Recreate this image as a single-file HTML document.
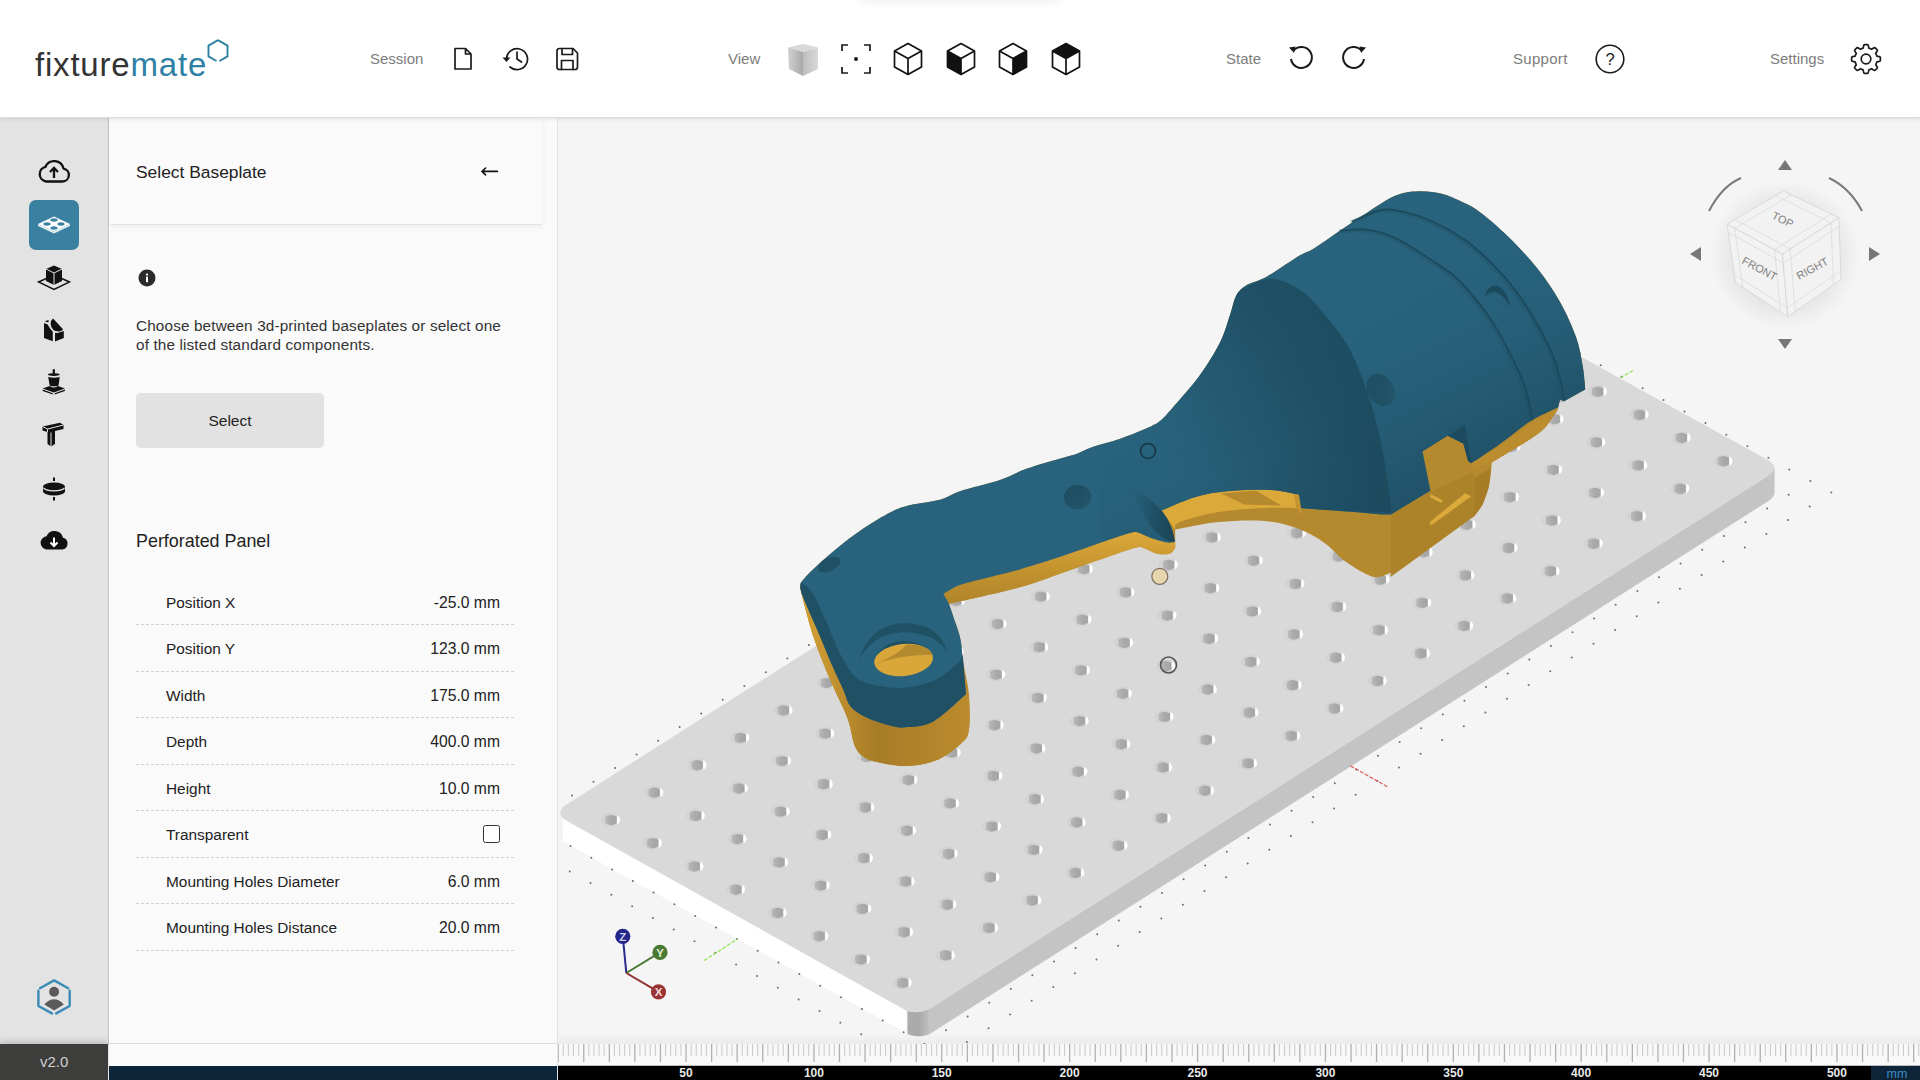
<!DOCTYPE html>
<html><head><meta charset="utf-8"><style>
*{box-sizing:border-box;margin:0;padding:0}
html,body{width:1920px;height:1080px;overflow:hidden;background:#f4f4f4;font-family:"Liberation Sans",sans-serif}
.abs{position:absolute}
#header{position:absolute;left:0;top:0;width:1920px;height:118px;background:#fff;border-bottom:1px solid #dcdcdc;box-shadow:0 1px 4px rgba(0,0,0,0.10);z-index:3}
.hl{position:absolute;font-size:15px;color:#7c7c7c;line-height:18px;top:50px;white-space:nowrap}
#sidebar{position:absolute;left:0;top:118px;width:109px;height:926px;background:#e3e3e3;border-right:1px solid #c4c4c4}
#panel{position:absolute;left:109px;top:118px;width:449px;height:926px;background:#fafafa;border-right:1px solid #e3e3e3;box-shadow:inset 1px 0 0 #fff}
#pcard{position:absolute;left:1px;top:0;width:432px;height:107px;background:#fafafa;border-bottom:1px solid #e2e2e2;box-shadow:0 2px 7px rgba(0,0,0,0.06)}
.t{position:absolute;white-space:nowrap;color:#222}
.row{position:absolute;left:27px;width:378px;height:46.5px;border-bottom:1px dashed #d0d0d0}
.row .l{position:absolute;left:30px;top:15px;font-size:15.4px;color:#222;line-height:18px;white-space:nowrap}
.row .v{position:absolute;right:14px;top:15px;font-size:15.7px;color:#222;line-height:18px;white-space:nowrap}
.sb{position:absolute;left:29px;width:50px;height:50px}
</style></head><body>
<svg id="scene" width="1920" height="1080" viewBox="0 0 1920 1080" style="position:absolute;left:0;top:0">
<defs>
<g id="hl"><ellipse rx="9.6" ry="6.8" fill="#d3d3d3"/><path d="M6.6,-4.9 A9.6,6.8 0 0 1 6.6,4.9 Q5.4,0 6.6,-4.9Z" fill="#fff"/><path d="M-5.4,-3.2 Q0.25,-6.6 5.9,-3.2 V3.3 Q0.25,7.6 -5.4,3.3 Z" fill="url(#hole)"/></g>
<linearGradient id="hole" x1="0" x2="1" y1="0" y2="0">
<stop offset="0" stop-color="#b8b8b8"/><stop offset="0.5" stop-color="#aaaaaa"/><stop offset="1" stop-color="#a4a4a4"/></linearGradient>

<linearGradient id="drumg" gradientUnits="userSpaceOnUse" x1="1430" y1="270" x2="1520" y2="445"><stop offset="0" stop-color="#163d4e" stop-opacity="0"/><stop offset="0.45" stop-color="#163d4e" stop-opacity="0.08"/><stop offset="1" stop-color="#163d4e" stop-opacity="0.38"/></linearGradient>
<linearGradient id="toothg" x1="0" y1="0" x2="1" y2="0"><stop offset="0" stop-color="#27617b" stop-opacity="0.2"/><stop offset="0.55" stop-color="#1f5165"/><stop offset="1" stop-color="#1b475a"/></linearGradient>
<linearGradient id="holebg" x1="0" y1="0" x2="1" y2="1"><stop offset="0" stop-color="#1e4e62"/><stop offset="0.55" stop-color="#1f5064"/><stop offset="1" stop-color="#25596f"/></linearGradient>
<linearGradient id="blueg" x1="0" y1="0" x2="1" y2="1"><stop offset="0" stop-color="#29637d"/><stop offset="0.6" stop-color="#28627c"/><stop offset="1" stop-color="#245a72"/></linearGradient>
<linearGradient id="shg" x1="0.95" y1="0.25" x2="0.05" y2="0.85"><stop offset="0" stop-color="#1d4c60"/><stop offset="0.3" stop-color="#1f5065"/><stop offset="0.62" stop-color="#23586e" stop-opacity="0.8"/><stop offset="0.95" stop-color="#27617b" stop-opacity="0"/></linearGradient>
<linearGradient id="ybandg" x1="0" y1="0" x2="0" y2="1"><stop offset="0" stop-color="#dca83b"/><stop offset="0.5" stop-color="#c4942f"/><stop offset="1" stop-color="#b0842a"/></linearGradient>
<linearGradient id="hookyg" x1="0" y1="0" x2="1" y2="0"><stop offset="0" stop-color="#d6a236"/><stop offset="0.45" stop-color="#a87c27"/><stop offset="1" stop-color="#bb8b2d"/></linearGradient>
</defs>
<clipPath id="vclip"><rect x="558" y="119" width="1362" height="925"/></clipPath>
<g clip-path="url(#vclip)">
<rect x="558" y="119" width="1362" height="925" fill="#f5f5f5"/>
<g fill="#4d4d4d" opacity="0.8"><circle cx="572" cy="795.5" r="1"/><circle cx="593.5" cy="781.8" r="1"/><circle cx="615.1" cy="768.1" r="1"/><circle cx="636.6" cy="754.4" r="1"/><circle cx="658.1" cy="740.8" r="1"/><circle cx="679.7" cy="727.1" r="1"/><circle cx="701.2" cy="713.4" r="1"/><circle cx="722.7" cy="699.7" r="1"/><circle cx="744.3" cy="686" r="1"/><circle cx="765.8" cy="672.3" r="1"/><circle cx="787.4" cy="658.6" r="1"/><circle cx="808.9" cy="644.9" r="1"/><circle cx="830.4" cy="631.2" r="1"/><circle cx="852" cy="617.5" r="1"/><circle cx="873.5" cy="603.8" r="1"/><circle cx="895.1" cy="590.1" r="1"/><circle cx="916.6" cy="576.4" r="1"/><circle cx="938.2" cy="562.7" r="1"/><circle cx="959.7" cy="549" r="1"/><circle cx="981.3" cy="535.3" r="1"/><circle cx="1002.8" cy="521.6" r="1"/><circle cx="1024.4" cy="507.9" r="1"/><circle cx="1045.9" cy="494.2" r="1"/><circle cx="1067.5" cy="480.5" r="1"/><circle cx="1089" cy="466.7" r="1"/><circle cx="1110.6" cy="453" r="1"/><circle cx="1132.1" cy="439.3" r="1"/><circle cx="1153.7" cy="425.6" r="1"/><circle cx="1175.3" cy="411.9" r="1"/><circle cx="1196.8" cy="398.2" r="1"/><circle cx="1218.4" cy="384.5" r="1"/><circle cx="1239.9" cy="370.8" r="1"/><circle cx="1261.5" cy="357.1" r="1"/><circle cx="1283.1" cy="343.4" r="1"/><circle cx="1304.6" cy="329.7" r="1"/><circle cx="1326.2" cy="315.9" r="1"/><circle cx="1347.8" cy="302.2" r="1"/><circle cx="1369.3" cy="288.5" r="1"/><circle cx="1390.9" cy="274.8" r="1"/><circle cx="1412.5" cy="261.1" r="1"/><circle cx="571.2" cy="820.8" r="1"/><circle cx="592.8" cy="807.1" r="1"/><circle cx="614.3" cy="793.4" r="1"/><circle cx="635.8" cy="779.7" r="1"/><circle cx="657.4" cy="766" r="1"/><circle cx="678.9" cy="752.4" r="1"/><circle cx="700.5" cy="738.7" r="1"/><circle cx="722" cy="725" r="1"/><circle cx="743.5" cy="711.3" r="1"/><circle cx="765.1" cy="697.6" r="1"/><circle cx="786.6" cy="683.9" r="1"/><circle cx="808.2" cy="670.2" r="1"/><circle cx="829.7" cy="656.5" r="1"/><circle cx="851.3" cy="642.8" r="1"/><circle cx="872.8" cy="629.1" r="1"/><circle cx="894.4" cy="615.4" r="1"/><circle cx="915.9" cy="601.7" r="1"/><circle cx="937.4" cy="588" r="1"/><circle cx="959" cy="574.3" r="1"/><circle cx="980.6" cy="560.6" r="1"/><circle cx="1002.1" cy="546.9" r="1"/><circle cx="1023.7" cy="533.1" r="1"/><circle cx="1045.2" cy="519.4" r="1"/><circle cx="1066.8" cy="505.7" r="1"/><circle cx="1088.3" cy="492" r="1"/><circle cx="1109.9" cy="478.3" r="1"/><circle cx="1131.4" cy="464.6" r="1"/><circle cx="1153" cy="450.9" r="1"/><circle cx="1174.6" cy="437.2" r="1"/><circle cx="1196.1" cy="423.5" r="1"/><circle cx="1217.7" cy="409.8" r="1"/><circle cx="1239.2" cy="396.1" r="1"/><circle cx="1260.8" cy="382.4" r="1"/><circle cx="1282.4" cy="368.6" r="1"/><circle cx="1303.9" cy="354.9" r="1"/><circle cx="1325.5" cy="341.2" r="1"/><circle cx="1347.1" cy="327.5" r="1"/><circle cx="1368.6" cy="313.8" r="1"/><circle cx="1390.2" cy="300.1" r="1"/><circle cx="1411.8" cy="286.4" r="1"/><circle cx="1433.4" cy="272.6" r="1"/><circle cx="592" cy="832.4" r="1"/><circle cx="613.6" cy="818.7" r="1"/><circle cx="635.1" cy="805" r="1"/><circle cx="656.6" cy="791.3" r="1"/><circle cx="678.2" cy="777.7" r="1"/><circle cx="699.7" cy="764" r="1"/><circle cx="721.3" cy="750.3" r="1"/><circle cx="742.8" cy="736.6" r="1"/><circle cx="764.3" cy="722.9" r="1"/><circle cx="785.9" cy="709.2" r="1"/><circle cx="807.4" cy="695.5" r="1"/><circle cx="829" cy="681.8" r="1"/><circle cx="850.5" cy="668.1" r="1"/><circle cx="872.1" cy="654.4" r="1"/><circle cx="893.6" cy="640.7" r="1"/><circle cx="915.2" cy="627" r="1"/><circle cx="936.7" cy="613.3" r="1"/><circle cx="958.3" cy="599.6" r="1"/><circle cx="979.8" cy="585.8" r="1"/><circle cx="1001.4" cy="572.1" r="1"/><circle cx="1022.9" cy="558.4" r="1"/><circle cx="1044.5" cy="544.7" r="1"/><circle cx="1066.1" cy="531" r="1"/><circle cx="1087.6" cy="517.3" r="1"/><circle cx="1109.2" cy="503.6" r="1"/><circle cx="1130.7" cy="489.9" r="1"/><circle cx="1152.3" cy="476.2" r="1"/><circle cx="1173.9" cy="462.5" r="1"/><circle cx="1195.4" cy="448.8" r="1"/><circle cx="1217" cy="435.1" r="1"/><circle cx="1238.6" cy="421.3" r="1"/><circle cx="1260.1" cy="407.6" r="1"/><circle cx="1281.7" cy="393.9" r="1"/><circle cx="1303.3" cy="380.2" r="1"/><circle cx="1324.8" cy="366.5" r="1"/><circle cx="1346.4" cy="352.8" r="1"/><circle cx="1368" cy="339.1" r="1"/><circle cx="1389.5" cy="325.3" r="1"/><circle cx="1411.1" cy="311.6" r="1"/><circle cx="1432.7" cy="297.9" r="1"/><circle cx="1454.3" cy="284.2" r="1"/><circle cx="569.7" cy="871.4" r="1"/><circle cx="612.8" cy="844" r="1"/><circle cx="634.3" cy="830.4" r="1"/><circle cx="655.9" cy="816.7" r="1"/><circle cx="677.4" cy="803" r="1"/><circle cx="699" cy="789.3" r="1"/><circle cx="720.5" cy="775.6" r="1"/><circle cx="742.1" cy="761.9" r="1"/><circle cx="763.6" cy="748.2" r="1"/><circle cx="785.2" cy="734.5" r="1"/><circle cx="806.7" cy="720.8" r="1"/><circle cx="828.2" cy="707.1" r="1"/><circle cx="849.8" cy="693.4" r="1"/><circle cx="871.3" cy="679.7" r="1"/><circle cx="892.9" cy="666" r="1"/><circle cx="914.5" cy="652.3" r="1"/><circle cx="936" cy="638.5" r="1"/><circle cx="957.6" cy="624.8" r="1"/><circle cx="979.1" cy="611.1" r="1"/><circle cx="1000.7" cy="597.4" r="1"/><circle cx="1022.2" cy="583.7" r="1"/><circle cx="1043.8" cy="570" r="1"/><circle cx="1065.4" cy="556.3" r="1"/><circle cx="1086.9" cy="542.6" r="1"/><circle cx="1108.5" cy="528.9" r="1"/><circle cx="1130" cy="515.2" r="1"/><circle cx="1151.6" cy="501.5" r="1"/><circle cx="1173.2" cy="487.8" r="1"/><circle cx="1194.7" cy="474.1" r="1"/><circle cx="1216.3" cy="460.3" r="1"/><circle cx="1237.9" cy="446.6" r="1"/><circle cx="1259.4" cy="432.9" r="1"/><circle cx="1281" cy="419.2" r="1"/><circle cx="1302.6" cy="405.5" r="1"/><circle cx="1324.1" cy="391.8" r="1"/><circle cx="1345.7" cy="378.1" r="1"/><circle cx="1367.3" cy="364.3" r="1"/><circle cx="1388.9" cy="350.6" r="1"/><circle cx="1410.4" cy="336.9" r="1"/><circle cx="1432" cy="323.2" r="1"/><circle cx="1453.6" cy="309.5" r="1"/><circle cx="1475.2" cy="295.8" r="1"/><circle cx="590.5" cy="883.1" r="1"/><circle cx="633.6" cy="855.7" r="1"/><circle cx="655.1" cy="842" r="1"/><circle cx="676.7" cy="828.3" r="1"/><circle cx="698.2" cy="814.6" r="1"/><circle cx="719.8" cy="800.9" r="1"/><circle cx="741.3" cy="787.2" r="1"/><circle cx="762.9" cy="773.5" r="1"/><circle cx="784.4" cy="759.8" r="1"/><circle cx="806" cy="746.1" r="1"/><circle cx="827.5" cy="732.4" r="1"/><circle cx="849.1" cy="718.7" r="1"/><circle cx="870.6" cy="705" r="1"/><circle cx="892.2" cy="691.3" r="1"/><circle cx="913.7" cy="677.6" r="1"/><circle cx="935.3" cy="663.8" r="1"/><circle cx="956.8" cy="650.1" r="1"/><circle cx="978.4" cy="636.4" r="1"/><circle cx="1000" cy="622.7" r="1"/><circle cx="1021.5" cy="609" r="1"/><circle cx="1043.1" cy="595.3" r="1"/><circle cx="1064.6" cy="581.6" r="1"/><circle cx="1086.2" cy="567.9" r="1"/><circle cx="1107.8" cy="554.2" r="1"/><circle cx="1129.3" cy="540.5" r="1"/><circle cx="1150.9" cy="526.8" r="1"/><circle cx="1172.5" cy="513.1" r="1"/><circle cx="1194" cy="499.3" r="1"/><circle cx="1215.6" cy="485.6" r="1"/><circle cx="1237.2" cy="471.9" r="1"/><circle cx="1258.7" cy="458.2" r="1"/><circle cx="1280.3" cy="444.5" r="1"/><circle cx="1301.9" cy="430.8" r="1"/><circle cx="1323.5" cy="417.1" r="1"/><circle cx="1345" cy="403.3" r="1"/><circle cx="1366.6" cy="389.6" r="1"/><circle cx="1388.2" cy="375.9" r="1"/><circle cx="1409.8" cy="362.2" r="1"/><circle cx="1431.3" cy="348.5" r="1"/><circle cx="1452.9" cy="334.8" r="1"/><circle cx="1474.5" cy="321" r="1"/><circle cx="1496.1" cy="307.3" r="1"/><circle cx="611.3" cy="894.7" r="1"/><circle cx="654.4" cy="867.3" r="1"/><circle cx="675.9" cy="853.6" r="1"/><circle cx="697.5" cy="839.9" r="1"/><circle cx="719" cy="826.2" r="1"/><circle cx="740.6" cy="812.5" r="1"/><circle cx="762.1" cy="798.8" r="1"/><circle cx="783.7" cy="785.1" r="1"/><circle cx="805.2" cy="771.4" r="1"/><circle cx="826.8" cy="757.7" r="1"/><circle cx="848.3" cy="744" r="1"/><circle cx="869.9" cy="730.3" r="1"/><circle cx="891.5" cy="716.6" r="1"/><circle cx="913" cy="702.9" r="1"/><circle cx="934.6" cy="689.2" r="1"/><circle cx="956.1" cy="675.4" r="1"/><circle cx="977.7" cy="661.7" r="1"/><circle cx="999.2" cy="648" r="1"/><circle cx="1020.8" cy="634.3" r="1"/><circle cx="1042.4" cy="620.6" r="1"/><circle cx="1063.9" cy="606.9" r="1"/><circle cx="1085.5" cy="593.2" r="1"/><circle cx="1107.1" cy="579.5" r="1"/><circle cx="1128.6" cy="565.8" r="1"/><circle cx="1150.2" cy="552.1" r="1"/><circle cx="1171.8" cy="538.4" r="1"/><circle cx="1193.3" cy="524.6" r="1"/><circle cx="1214.9" cy="510.9" r="1"/><circle cx="1236.5" cy="497.2" r="1"/><circle cx="1258" cy="483.5" r="1"/><circle cx="1279.6" cy="469.8" r="1"/><circle cx="1301.2" cy="456.1" r="1"/><circle cx="1322.8" cy="442.3" r="1"/><circle cx="1344.3" cy="428.6" r="1"/><circle cx="1365.9" cy="414.9" r="1"/><circle cx="1387.5" cy="401.2" r="1"/><circle cx="1409.1" cy="387.5" r="1"/><circle cx="1430.7" cy="373.8" r="1"/><circle cx="1452.2" cy="360" r="1"/><circle cx="1473.8" cy="346.3" r="1"/><circle cx="1495.4" cy="332.6" r="1"/><circle cx="1517" cy="318.9" r="1"/><circle cx="632.1" cy="906.3" r="1"/><circle cx="675.2" cy="878.9" r="1"/><circle cx="696.7" cy="865.2" r="1"/><circle cx="718.3" cy="851.5" r="1"/><circle cx="739.8" cy="837.8" r="1"/><circle cx="761.4" cy="824.1" r="1"/><circle cx="782.9" cy="810.4" r="1"/><circle cx="804.5" cy="796.7" r="1"/><circle cx="826.1" cy="783" r="1"/><circle cx="847.6" cy="769.3" r="1"/><circle cx="869.2" cy="755.6" r="1"/><circle cx="890.7" cy="741.9" r="1"/><circle cx="912.3" cy="728.2" r="1"/><circle cx="933.8" cy="714.5" r="1"/><circle cx="955.4" cy="700.8" r="1"/><circle cx="977" cy="687" r="1"/><circle cx="998.5" cy="673.3" r="1"/><circle cx="1020.1" cy="659.6" r="1"/><circle cx="1041.7" cy="645.9" r="1"/><circle cx="1063.2" cy="632.2" r="1"/><circle cx="1084.8" cy="618.5" r="1"/><circle cx="1106.4" cy="604.8" r="1"/><circle cx="1127.9" cy="591.1" r="1"/><circle cx="1149.5" cy="577.4" r="1"/><circle cx="1171.1" cy="563.7" r="1"/><circle cx="1192.6" cy="549.9" r="1"/><circle cx="1214.2" cy="536.2" r="1"/><circle cx="1235.8" cy="522.5" r="1"/><circle cx="1257.4" cy="508.8" r="1"/><circle cx="1278.9" cy="495.1" r="1"/><circle cx="1300.5" cy="481.4" r="1"/><circle cx="1322.1" cy="467.6" r="1"/><circle cx="1343.7" cy="453.9" r="1"/><circle cx="1365.2" cy="440.2" r="1"/><circle cx="1386.8" cy="426.5" r="1"/><circle cx="1408.4" cy="412.8" r="1"/><circle cx="1430" cy="399.1" r="1"/><circle cx="1451.6" cy="385.3" r="1"/><circle cx="1473.2" cy="371.6" r="1"/><circle cx="1494.7" cy="357.9" r="1"/><circle cx="1516.3" cy="344.2" r="1"/><circle cx="1537.9" cy="330.4" r="1"/><circle cx="652.9" cy="917.9" r="1"/><circle cx="696" cy="890.5" r="1"/><circle cx="717.5" cy="876.8" r="1"/><circle cx="739.1" cy="863.1" r="1"/><circle cx="760.7" cy="849.4" r="1"/><circle cx="782.2" cy="835.7" r="1"/><circle cx="803.8" cy="822" r="1"/><circle cx="825.3" cy="808.3" r="1"/><circle cx="846.9" cy="794.6" r="1"/><circle cx="868.4" cy="780.9" r="1"/><circle cx="890" cy="767.2" r="1"/><circle cx="911.6" cy="753.5" r="1"/><circle cx="933.1" cy="739.8" r="1"/><circle cx="954.7" cy="726.1" r="1"/><circle cx="976.2" cy="712.4" r="1"/><circle cx="997.8" cy="698.7" r="1"/><circle cx="1019.4" cy="684.9" r="1"/><circle cx="1040.9" cy="671.2" r="1"/><circle cx="1062.5" cy="657.5" r="1"/><circle cx="1084.1" cy="643.8" r="1"/><circle cx="1105.7" cy="630.1" r="1"/><circle cx="1127.2" cy="616.4" r="1"/><circle cx="1148.8" cy="602.7" r="1"/><circle cx="1170.4" cy="589" r="1"/><circle cx="1191.9" cy="575.2" r="1"/><circle cx="1213.5" cy="561.5" r="1"/><circle cx="1235.1" cy="547.8" r="1"/><circle cx="1256.7" cy="534.1" r="1"/><circle cx="1278.2" cy="520.4" r="1"/><circle cx="1299.8" cy="506.7" r="1"/><circle cx="1321.4" cy="492.9" r="1"/><circle cx="1343" cy="479.2" r="1"/><circle cx="1364.6" cy="465.5" r="1"/><circle cx="1386.1" cy="451.8" r="1"/><circle cx="1407.7" cy="438.1" r="1"/><circle cx="1429.3" cy="424.3" r="1"/><circle cx="1450.9" cy="410.6" r="1"/><circle cx="1472.5" cy="396.9" r="1"/><circle cx="1494.1" cy="383.2" r="1"/><circle cx="1515.7" cy="369.5" r="1"/><circle cx="1537.2" cy="355.7" r="1"/><circle cx="1558.8" cy="342" r="1"/><circle cx="673.7" cy="929.6" r="1"/><circle cx="716.8" cy="902.1" r="1"/><circle cx="738.4" cy="888.4" r="1"/><circle cx="759.9" cy="874.7" r="1"/><circle cx="781.5" cy="861" r="1"/><circle cx="803" cy="847.3" r="1"/><circle cx="824.6" cy="833.6" r="1"/><circle cx="846.2" cy="819.9" r="1"/><circle cx="867.7" cy="806.2" r="1"/><circle cx="889.3" cy="792.5" r="1"/><circle cx="910.8" cy="778.8" r="1"/><circle cx="932.4" cy="765.1" r="1"/><circle cx="954" cy="751.4" r="1"/><circle cx="975.5" cy="737.7" r="1"/><circle cx="997.1" cy="724" r="1"/><circle cx="1018.7" cy="710.3" r="1"/><circle cx="1040.2" cy="696.5" r="1"/><circle cx="1061.8" cy="682.8" r="1"/><circle cx="1083.4" cy="669.1" r="1"/><circle cx="1104.9" cy="655.4" r="1"/><circle cx="1126.5" cy="641.7" r="1"/><circle cx="1148.1" cy="628" r="1"/><circle cx="1169.7" cy="614.3" r="1"/><circle cx="1191.2" cy="600.6" r="1"/><circle cx="1212.8" cy="586.8" r="1"/><circle cx="1234.4" cy="573.1" r="1"/><circle cx="1256" cy="559.4" r="1"/><circle cx="1277.6" cy="545.7" r="1"/><circle cx="1299.1" cy="532" r="1"/><circle cx="1320.7" cy="518.3" r="1"/><circle cx="1342.3" cy="504.5" r="1"/><circle cx="1363.9" cy="490.8" r="1"/><circle cx="1385.5" cy="477.1" r="1"/><circle cx="1407.1" cy="463.4" r="1"/><circle cx="1428.6" cy="449.6" r="1"/><circle cx="1450.2" cy="435.9" r="1"/><circle cx="1471.8" cy="422.2" r="1"/><circle cx="1493.4" cy="408.5" r="1"/><circle cx="1515" cy="394.8" r="1"/><circle cx="1536.6" cy="381" r="1"/><circle cx="1558.2" cy="367.3" r="1"/><circle cx="1579.8" cy="353.6" r="1"/><circle cx="694.5" cy="941.2" r="1"/><circle cx="737.6" cy="913.8" r="1"/><circle cx="759.2" cy="900.1" r="1"/><circle cx="780.7" cy="886.4" r="1"/><circle cx="802.3" cy="872.7" r="1"/><circle cx="823.9" cy="859" r="1"/><circle cx="845.4" cy="845.3" r="1"/><circle cx="867" cy="831.5" r="1"/><circle cx="888.5" cy="817.8" r="1"/><circle cx="910.1" cy="804.1" r="1"/><circle cx="931.7" cy="790.4" r="1"/><circle cx="953.2" cy="776.7" r="1"/><circle cx="974.8" cy="763" r="1"/><circle cx="996.4" cy="749.3" r="1"/><circle cx="1018" cy="735.6" r="1"/><circle cx="1039.5" cy="721.9" r="1"/><circle cx="1061.1" cy="708.2" r="1"/><circle cx="1082.7" cy="694.4" r="1"/><circle cx="1104.2" cy="680.7" r="1"/><circle cx="1125.8" cy="667" r="1"/><circle cx="1147.4" cy="653.3" r="1"/><circle cx="1169" cy="639.6" r="1"/><circle cx="1190.5" cy="625.9" r="1"/><circle cx="1212.1" cy="612.2" r="1"/><circle cx="1233.7" cy="598.4" r="1"/><circle cx="1255.3" cy="584.7" r="1"/><circle cx="1276.9" cy="571" r="1"/><circle cx="1298.4" cy="557.3" r="1"/><circle cx="1320" cy="543.6" r="1"/><circle cx="1341.6" cy="529.8" r="1"/><circle cx="1363.2" cy="516.1" r="1"/><circle cx="1384.8" cy="502.4" r="1"/><circle cx="1406.4" cy="488.7" r="1"/><circle cx="1428" cy="475" r="1"/><circle cx="1449.6" cy="461.2" r="1"/><circle cx="1471.1" cy="447.5" r="1"/><circle cx="1492.7" cy="433.8" r="1"/><circle cx="1514.3" cy="420.1" r="1"/><circle cx="1535.9" cy="406.3" r="1"/><circle cx="1557.5" cy="392.6" r="1"/><circle cx="1579.1" cy="378.9" r="1"/><circle cx="1600.7" cy="365.2" r="1"/><circle cx="715.3" cy="952.8" r="1"/><circle cx="758.4" cy="925.4" r="1"/><circle cx="780" cy="911.7" r="1"/><circle cx="801.6" cy="898" r="1"/><circle cx="823.1" cy="884.3" r="1"/><circle cx="844.7" cy="870.6" r="1"/><circle cx="866.3" cy="856.9" r="1"/><circle cx="887.8" cy="843.2" r="1"/><circle cx="909.4" cy="829.5" r="1"/><circle cx="931" cy="815.8" r="1"/><circle cx="952.5" cy="802" r="1"/><circle cx="974.1" cy="788.3" r="1"/><circle cx="995.7" cy="774.6" r="1"/><circle cx="1017.2" cy="760.9" r="1"/><circle cx="1038.8" cy="747.2" r="1"/><circle cx="1060.4" cy="733.5" r="1"/><circle cx="1082" cy="719.8" r="1"/><circle cx="1103.5" cy="706.1" r="1"/><circle cx="1125.1" cy="692.3" r="1"/><circle cx="1146.7" cy="678.6" r="1"/><circle cx="1168.3" cy="664.9" r="1"/><circle cx="1189.8" cy="651.2" r="1"/><circle cx="1211.4" cy="637.5" r="1"/><circle cx="1233" cy="623.8" r="1"/><circle cx="1254.6" cy="610" r="1"/><circle cx="1276.2" cy="596.3" r="1"/><circle cx="1297.8" cy="582.6" r="1"/><circle cx="1319.3" cy="568.9" r="1"/><circle cx="1340.9" cy="555.2" r="1"/><circle cx="1362.5" cy="541.4" r="1"/><circle cx="1384.1" cy="527.7" r="1"/><circle cx="1405.7" cy="514" r="1"/><circle cx="1427.3" cy="500.3" r="1"/><circle cx="1448.9" cy="486.5" r="1"/><circle cx="1470.5" cy="472.8" r="1"/><circle cx="1492.1" cy="459.1" r="1"/><circle cx="1513.7" cy="445.4" r="1"/><circle cx="1535.3" cy="431.6" r="1"/><circle cx="1556.8" cy="417.9" r="1"/><circle cx="1578.4" cy="404.2" r="1"/><circle cx="1600" cy="390.5" r="1"/><circle cx="1621.6" cy="376.7" r="1"/><circle cx="736.1" cy="964.5" r="1"/><circle cx="779.3" cy="937" r="1"/><circle cx="800.8" cy="923.3" r="1"/><circle cx="822.4" cy="909.6" r="1"/><circle cx="844" cy="895.9" r="1"/><circle cx="865.5" cy="882.2" r="1"/><circle cx="887.1" cy="868.5" r="1"/><circle cx="908.7" cy="854.8" r="1"/><circle cx="930.2" cy="841.1" r="1"/><circle cx="951.8" cy="827.4" r="1"/><circle cx="973.4" cy="813.7" r="1"/><circle cx="995" cy="800" r="1"/><circle cx="1016.5" cy="786.2" r="1"/><circle cx="1038.1" cy="772.5" r="1"/><circle cx="1059.7" cy="758.8" r="1"/><circle cx="1081.3" cy="745.1" r="1"/><circle cx="1102.8" cy="731.4" r="1"/><circle cx="1124.4" cy="717.7" r="1"/><circle cx="1146" cy="704" r="1"/><circle cx="1167.6" cy="690.2" r="1"/><circle cx="1189.2" cy="676.5" r="1"/><circle cx="1210.7" cy="662.8" r="1"/><circle cx="1232.3" cy="649.1" r="1"/><circle cx="1253.9" cy="635.4" r="1"/><circle cx="1275.5" cy="621.6" r="1"/><circle cx="1297.1" cy="607.9" r="1"/><circle cx="1318.7" cy="594.2" r="1"/><circle cx="1340.3" cy="580.5" r="1"/><circle cx="1361.8" cy="566.8" r="1"/><circle cx="1383.4" cy="553" r="1"/><circle cx="1405" cy="539.3" r="1"/><circle cx="1426.6" cy="525.6" r="1"/><circle cx="1448.2" cy="511.9" r="1"/><circle cx="1469.8" cy="498.1" r="1"/><circle cx="1491.4" cy="484.4" r="1"/><circle cx="1513" cy="470.7" r="1"/><circle cx="1534.6" cy="457" r="1"/><circle cx="1556.2" cy="443.2" r="1"/><circle cx="1577.8" cy="429.5" r="1"/><circle cx="1599.4" cy="415.8" r="1"/><circle cx="1621" cy="402" r="1"/><circle cx="1642.6" cy="388.3" r="1"/><circle cx="757" cy="976.1" r="1"/><circle cx="800.1" cy="948.7" r="1"/><circle cx="821.7" cy="935" r="1"/><circle cx="843.2" cy="921.3" r="1"/><circle cx="864.8" cy="907.6" r="1"/><circle cx="886.4" cy="893.8" r="1"/><circle cx="907.9" cy="880.1" r="1"/><circle cx="929.5" cy="866.4" r="1"/><circle cx="951.1" cy="852.7" r="1"/><circle cx="972.7" cy="839" r="1"/><circle cx="994.2" cy="825.3" r="1"/><circle cx="1015.8" cy="811.6" r="1"/><circle cx="1037.4" cy="797.9" r="1"/><circle cx="1059" cy="784.1" r="1"/><circle cx="1080.5" cy="770.4" r="1"/><circle cx="1102.1" cy="756.7" r="1"/><circle cx="1123.7" cy="743" r="1"/><circle cx="1145.3" cy="729.3" r="1"/><circle cx="1166.9" cy="715.6" r="1"/><circle cx="1188.5" cy="701.8" r="1"/><circle cx="1210" cy="688.1" r="1"/><circle cx="1231.6" cy="674.4" r="1"/><circle cx="1253.2" cy="660.7" r="1"/><circle cx="1274.8" cy="647" r="1"/><circle cx="1296.4" cy="633.2" r="1"/><circle cx="1318" cy="619.5" r="1"/><circle cx="1339.6" cy="605.8" r="1"/><circle cx="1361.2" cy="592.1" r="1"/><circle cx="1382.8" cy="578.4" r="1"/><circle cx="1404.3" cy="564.6" r="1"/><circle cx="1425.9" cy="550.9" r="1"/><circle cx="1447.5" cy="537.2" r="1"/><circle cx="1469.1" cy="523.5" r="1"/><circle cx="1490.7" cy="509.7" r="1"/><circle cx="1512.3" cy="496" r="1"/><circle cx="1533.9" cy="482.3" r="1"/><circle cx="1555.5" cy="468.5" r="1"/><circle cx="1577.1" cy="454.8" r="1"/><circle cx="1598.7" cy="441.1" r="1"/><circle cx="1620.3" cy="427.4" r="1"/><circle cx="1641.9" cy="413.6" r="1"/><circle cx="1663.5" cy="399.9" r="1"/><circle cx="777.8" cy="987.7" r="1"/><circle cx="820.9" cy="960.3" r="1"/><circle cx="842.5" cy="946.6" r="1"/><circle cx="864.1" cy="932.9" r="1"/><circle cx="885.6" cy="919.2" r="1"/><circle cx="907.2" cy="905.5" r="1"/><circle cx="928.8" cy="891.8" r="1"/><circle cx="950.4" cy="878.1" r="1"/><circle cx="971.9" cy="864.3" r="1"/><circle cx="993.5" cy="850.6" r="1"/><circle cx="1015.1" cy="836.9" r="1"/><circle cx="1036.7" cy="823.2" r="1"/><circle cx="1058.3" cy="809.5" r="1"/><circle cx="1079.8" cy="795.8" r="1"/><circle cx="1101.4" cy="782.1" r="1"/><circle cx="1123" cy="768.3" r="1"/><circle cx="1144.6" cy="754.6" r="1"/><circle cx="1166.2" cy="740.9" r="1"/><circle cx="1187.8" cy="727.2" r="1"/><circle cx="1209.3" cy="713.5" r="1"/><circle cx="1230.9" cy="699.7" r="1"/><circle cx="1252.5" cy="686" r="1"/><circle cx="1274.1" cy="672.3" r="1"/><circle cx="1295.7" cy="658.6" r="1"/><circle cx="1317.3" cy="644.9" r="1"/><circle cx="1338.9" cy="631.1" r="1"/><circle cx="1360.5" cy="617.4" r="1"/><circle cx="1382.1" cy="603.7" r="1"/><circle cx="1403.7" cy="590" r="1"/><circle cx="1425.3" cy="576.2" r="1"/><circle cx="1446.9" cy="562.5" r="1"/><circle cx="1468.5" cy="548.8" r="1"/><circle cx="1490.1" cy="535.1" r="1"/><circle cx="1511.7" cy="521.3" r="1"/><circle cx="1533.3" cy="507.6" r="1"/><circle cx="1554.9" cy="493.9" r="1"/><circle cx="1576.5" cy="480.1" r="1"/><circle cx="1598.1" cy="466.4" r="1"/><circle cx="1619.7" cy="452.7" r="1"/><circle cx="1641.3" cy="438.9" r="1"/><circle cx="1662.9" cy="425.2" r="1"/><circle cx="1684.5" cy="411.5" r="1"/><circle cx="798.6" cy="999.4" r="1"/><circle cx="841.8" cy="972" r="1"/><circle cx="863.3" cy="958.3" r="1"/><circle cx="884.9" cy="944.5" r="1"/><circle cx="906.5" cy="930.8" r="1"/><circle cx="928.1" cy="917.1" r="1"/><circle cx="949.6" cy="903.4" r="1"/><circle cx="971.2" cy="889.7" r="1"/><circle cx="992.8" cy="876" r="1"/><circle cx="1014.4" cy="862.3" r="1"/><circle cx="1036" cy="848.5" r="1"/><circle cx="1057.5" cy="834.8" r="1"/><circle cx="1079.1" cy="821.1" r="1"/><circle cx="1100.7" cy="807.4" r="1"/><circle cx="1122.3" cy="793.7" r="1"/><circle cx="1143.9" cy="780" r="1"/><circle cx="1165.5" cy="766.2" r="1"/><circle cx="1187.1" cy="752.5" r="1"/><circle cx="1208.6" cy="738.8" r="1"/><circle cx="1230.2" cy="725.1" r="1"/><circle cx="1251.8" cy="711.4" r="1"/><circle cx="1273.4" cy="697.6" r="1"/><circle cx="1295" cy="683.9" r="1"/><circle cx="1316.6" cy="670.2" r="1"/><circle cx="1338.2" cy="656.5" r="1"/><circle cx="1359.8" cy="642.7" r="1"/><circle cx="1381.4" cy="629" r="1"/><circle cx="1403" cy="615.3" r="1"/><circle cx="1424.6" cy="601.6" r="1"/><circle cx="1446.2" cy="587.8" r="1"/><circle cx="1467.8" cy="574.1" r="1"/><circle cx="1489.4" cy="560.4" r="1"/><circle cx="1511" cy="546.7" r="1"/><circle cx="1532.6" cy="532.9" r="1"/><circle cx="1554.2" cy="519.2" r="1"/><circle cx="1575.8" cy="505.5" r="1"/><circle cx="1597.4" cy="491.7" r="1"/><circle cx="1619" cy="478" r="1"/><circle cx="1640.6" cy="464.3" r="1"/><circle cx="1662.2" cy="450.5" r="1"/><circle cx="1683.8" cy="436.8" r="1"/><circle cx="1705.5" cy="423.1" r="1"/><circle cx="819.5" cy="1011" r="1"/><circle cx="862.6" cy="983.6" r="1"/><circle cx="884.2" cy="969.9" r="1"/><circle cx="905.8" cy="956.2" r="1"/><circle cx="927.3" cy="942.5" r="1"/><circle cx="948.9" cy="928.8" r="1"/><circle cx="970.5" cy="915" r="1"/><circle cx="992.1" cy="901.3" r="1"/><circle cx="1013.7" cy="887.6" r="1"/><circle cx="1035.3" cy="873.9" r="1"/><circle cx="1056.8" cy="860.2" r="1"/><circle cx="1078.4" cy="846.5" r="1"/><circle cx="1100" cy="832.7" r="1"/><circle cx="1121.6" cy="819" r="1"/><circle cx="1143.2" cy="805.3" r="1"/><circle cx="1164.8" cy="791.6" r="1"/><circle cx="1186.4" cy="777.9" r="1"/><circle cx="1208" cy="764.1" r="1"/><circle cx="1229.5" cy="750.4" r="1"/><circle cx="1251.1" cy="736.7" r="1"/><circle cx="1272.7" cy="723" r="1"/><circle cx="1294.3" cy="709.3" r="1"/><circle cx="1315.9" cy="695.5" r="1"/><circle cx="1337.5" cy="681.8" r="1"/><circle cx="1359.1" cy="668.1" r="1"/><circle cx="1380.7" cy="654.4" r="1"/><circle cx="1402.3" cy="640.6" r="1"/><circle cx="1423.9" cy="626.9" r="1"/><circle cx="1445.5" cy="613.2" r="1"/><circle cx="1467.1" cy="599.4" r="1"/><circle cx="1488.7" cy="585.7" r="1"/><circle cx="1510.3" cy="572" r="1"/><circle cx="1531.9" cy="558.3" r="1"/><circle cx="1553.5" cy="544.5" r="1"/><circle cx="1575.1" cy="530.8" r="1"/><circle cx="1596.8" cy="517.1" r="1"/><circle cx="1618.4" cy="503.3" r="1"/><circle cx="1640" cy="489.6" r="1"/><circle cx="1661.6" cy="475.9" r="1"/><circle cx="1683.2" cy="462.1" r="1"/><circle cx="1704.8" cy="448.4" r="1"/><circle cx="1726.4" cy="434.7" r="1"/><circle cx="840.3" cy="1022.7" r="1"/><circle cx="883.5" cy="995.3" r="1"/><circle cx="905" cy="981.5" r="1"/><circle cx="926.6" cy="967.8" r="1"/><circle cx="948.2" cy="954.1" r="1"/><circle cx="969.8" cy="940.4" r="1"/><circle cx="991.4" cy="926.7" r="1"/><circle cx="1013" cy="913" r="1"/><circle cx="1034.5" cy="899.2" r="1"/><circle cx="1056.1" cy="885.5" r="1"/><circle cx="1077.7" cy="871.8" r="1"/><circle cx="1099.3" cy="858.1" r="1"/><circle cx="1120.9" cy="844.4" r="1"/><circle cx="1142.5" cy="830.7" r="1"/><circle cx="1164.1" cy="816.9" r="1"/><circle cx="1185.7" cy="803.2" r="1"/><circle cx="1207.3" cy="789.5" r="1"/><circle cx="1228.9" cy="775.8" r="1"/><circle cx="1250.4" cy="762" r="1"/><circle cx="1272" cy="748.3" r="1"/><circle cx="1293.6" cy="734.6" r="1"/><circle cx="1315.2" cy="720.9" r="1"/><circle cx="1336.8" cy="707.1" r="1"/><circle cx="1358.4" cy="693.4" r="1"/><circle cx="1380" cy="679.7" r="1"/><circle cx="1401.6" cy="666" r="1"/><circle cx="1423.2" cy="652.2" r="1"/><circle cx="1444.8" cy="638.5" r="1"/><circle cx="1466.4" cy="624.8" r="1"/><circle cx="1488.1" cy="611.1" r="1"/><circle cx="1509.7" cy="597.3" r="1"/><circle cx="1531.3" cy="583.6" r="1"/><circle cx="1552.9" cy="569.9" r="1"/><circle cx="1574.5" cy="556.1" r="1"/><circle cx="1596.1" cy="542.4" r="1"/><circle cx="1617.7" cy="528.7" r="1"/><circle cx="1639.3" cy="514.9" r="1"/><circle cx="1660.9" cy="501.2" r="1"/><circle cx="1682.5" cy="487.5" r="1"/><circle cx="1704.2" cy="473.7" r="1"/><circle cx="1725.8" cy="460" r="1"/><circle cx="1747.4" cy="446.2" r="1"/><circle cx="861.2" cy="1034.3" r="1"/><circle cx="904.3" cy="1006.9" r="1"/><circle cx="925.9" cy="993.2" r="1"/><circle cx="947.5" cy="979.5" r="1"/><circle cx="969.1" cy="965.8" r="1"/><circle cx="990.7" cy="952" r="1"/><circle cx="1012.2" cy="938.3" r="1"/><circle cx="1033.8" cy="924.6" r="1"/><circle cx="1055.4" cy="910.9" r="1"/><circle cx="1077" cy="897.2" r="1"/><circle cx="1098.6" cy="883.5" r="1"/><circle cx="1120.2" cy="869.7" r="1"/><circle cx="1141.8" cy="856" r="1"/><circle cx="1163.4" cy="842.3" r="1"/><circle cx="1185" cy="828.6" r="1"/><circle cx="1206.6" cy="814.8" r="1"/><circle cx="1228.2" cy="801.1" r="1"/><circle cx="1249.8" cy="787.4" r="1"/><circle cx="1271.4" cy="773.7" r="1"/><circle cx="1293" cy="759.9" r="1"/><circle cx="1314.5" cy="746.2" r="1"/><circle cx="1336.2" cy="732.5" r="1"/><circle cx="1357.8" cy="718.8" r="1"/><circle cx="1379.4" cy="705" r="1"/><circle cx="1401" cy="691.3" r="1"/><circle cx="1422.6" cy="677.6" r="1"/><circle cx="1444.2" cy="663.9" r="1"/><circle cx="1465.8" cy="650.1" r="1"/><circle cx="1487.4" cy="636.4" r="1"/><circle cx="1509" cy="622.7" r="1"/><circle cx="1530.6" cy="608.9" r="1"/><circle cx="1552.2" cy="595.2" r="1"/><circle cx="1573.8" cy="581.5" r="1"/><circle cx="1595.4" cy="567.7" r="1"/><circle cx="1617" cy="554" r="1"/><circle cx="1638.7" cy="540.3" r="1"/><circle cx="1660.3" cy="526.5" r="1"/><circle cx="1681.9" cy="512.8" r="1"/><circle cx="1703.5" cy="499.1" r="1"/><circle cx="1725.1" cy="485.3" r="1"/><circle cx="1746.7" cy="471.6" r="1"/><circle cx="1768.4" cy="457.8" r="1"/><circle cx="925.2" cy="1018.6" r="1"/><circle cx="946.8" cy="1004.8" r="1"/><circle cx="968.3" cy="991.1" r="1"/><circle cx="989.9" cy="977.4" r="1"/><circle cx="1011.5" cy="963.7" r="1"/><circle cx="1033.1" cy="950" r="1"/><circle cx="1054.7" cy="936.3" r="1"/><circle cx="1076.3" cy="922.5" r="1"/><circle cx="1097.9" cy="908.8" r="1"/><circle cx="1119.5" cy="895.1" r="1"/><circle cx="1141.1" cy="881.4" r="1"/><circle cx="1162.7" cy="867.6" r="1"/><circle cx="1184.3" cy="853.9" r="1"/><circle cx="1205.9" cy="840.2" r="1"/><circle cx="1227.5" cy="826.5" r="1"/><circle cx="1249.1" cy="812.8" r="1"/><circle cx="1270.7" cy="799" r="1"/><circle cx="1292.3" cy="785.3" r="1"/><circle cx="1313.9" cy="771.6" r="1"/><circle cx="1335.5" cy="757.9" r="1"/><circle cx="1357.1" cy="744.1" r="1"/><circle cx="1378.7" cy="730.4" r="1"/><circle cx="1400.3" cy="716.7" r="1"/><circle cx="1421.9" cy="702.9" r="1"/><circle cx="1443.5" cy="689.2" r="1"/><circle cx="1465.1" cy="675.5" r="1"/><circle cx="1486.7" cy="661.7" r="1"/><circle cx="1508.3" cy="648" r="1"/><circle cx="1529.9" cy="634.3" r="1"/><circle cx="1551.5" cy="620.5" r="1"/><circle cx="1573.2" cy="606.8" r="1"/><circle cx="1594.8" cy="593.1" r="1"/><circle cx="1616.4" cy="579.3" r="1"/><circle cx="1638" cy="565.6" r="1"/><circle cx="1659.6" cy="551.9" r="1"/><circle cx="1681.2" cy="538.1" r="1"/><circle cx="1702.9" cy="524.4" r="1"/><circle cx="1724.5" cy="510.7" r="1"/><circle cx="1746.1" cy="496.9" r="1"/><circle cx="1767.7" cy="483.2" r="1"/><circle cx="1789.3" cy="469.4" r="1"/><circle cx="946" cy="1030.2" r="1"/><circle cx="967.6" cy="1016.5" r="1"/><circle cx="989.2" cy="1002.8" r="1"/><circle cx="1010.8" cy="989.1" r="1"/><circle cx="1032.4" cy="975.3" r="1"/><circle cx="1054" cy="961.6" r="1"/><circle cx="1075.6" cy="947.9" r="1"/><circle cx="1097.2" cy="934.2" r="1"/><circle cx="1118.8" cy="920.5" r="1"/><circle cx="1140.4" cy="906.7" r="1"/><circle cx="1162" cy="893" r="1"/><circle cx="1183.6" cy="879.3" r="1"/><circle cx="1205.2" cy="865.6" r="1"/><circle cx="1226.8" cy="851.8" r="1"/><circle cx="1248.4" cy="838.1" r="1"/><circle cx="1270" cy="824.4" r="1"/><circle cx="1291.6" cy="810.7" r="1"/><circle cx="1313.2" cy="796.9" r="1"/><circle cx="1334.8" cy="783.2" r="1"/><circle cx="1356.4" cy="769.5" r="1"/><circle cx="1378" cy="755.8" r="1"/><circle cx="1399.6" cy="742" r="1"/><circle cx="1421.2" cy="728.3" r="1"/><circle cx="1442.8" cy="714.6" r="1"/><circle cx="1464.4" cy="700.8" r="1"/><circle cx="1486" cy="687.1" r="1"/><circle cx="1507.7" cy="673.4" r="1"/><circle cx="1529.3" cy="659.6" r="1"/><circle cx="1550.9" cy="645.9" r="1"/><circle cx="1572.5" cy="632.2" r="1"/><circle cx="1594.1" cy="618.4" r="1"/><circle cx="1615.7" cy="604.7" r="1"/><circle cx="1637.4" cy="591" r="1"/><circle cx="1659" cy="577.2" r="1"/><circle cx="1680.6" cy="563.5" r="1"/><circle cx="1702.2" cy="549.7" r="1"/><circle cx="1723.8" cy="536" r="1"/><circle cx="1745.5" cy="522.3" r="1"/><circle cx="1767.1" cy="508.5" r="1"/><circle cx="1788.7" cy="494.8" r="1"/><circle cx="1810.3" cy="481" r="1"/><circle cx="966.9" cy="1041.9" r="1"/><circle cx="988.5" cy="1028.2" r="1"/><circle cx="1010.1" cy="1014.4" r="1"/><circle cx="1031.7" cy="1000.7" r="1"/><circle cx="1053.3" cy="987" r="1"/><circle cx="1074.9" cy="973.3" r="1"/><circle cx="1096.5" cy="959.6" r="1"/><circle cx="1118.1" cy="945.8" r="1"/><circle cx="1139.7" cy="932.1" r="1"/><circle cx="1161.3" cy="918.4" r="1"/><circle cx="1182.9" cy="904.7" r="1"/><circle cx="1204.5" cy="890.9" r="1"/><circle cx="1226.1" cy="877.2" r="1"/><circle cx="1247.7" cy="863.5" r="1"/><circle cx="1269.3" cy="849.8" r="1"/><circle cx="1290.9" cy="836" r="1"/><circle cx="1312.5" cy="822.3" r="1"/><circle cx="1334.1" cy="808.6" r="1"/><circle cx="1355.7" cy="794.8" r="1"/><circle cx="1377.3" cy="781.1" r="1"/><circle cx="1398.9" cy="767.4" r="1"/><circle cx="1420.5" cy="753.7" r="1"/><circle cx="1442.1" cy="739.9" r="1"/><circle cx="1463.8" cy="726.2" r="1"/><circle cx="1485.4" cy="712.5" r="1"/><circle cx="1507" cy="698.7" r="1"/><circle cx="1528.6" cy="685" r="1"/><circle cx="1550.2" cy="671.3" r="1"/><circle cx="1571.8" cy="657.5" r="1"/><circle cx="1593.5" cy="643.8" r="1"/><circle cx="1615.1" cy="630" r="1"/><circle cx="1636.7" cy="616.3" r="1"/><circle cx="1658.3" cy="602.6" r="1"/><circle cx="1679.9" cy="588.8" r="1"/><circle cx="1701.6" cy="575.1" r="1"/><circle cx="1723.2" cy="561.4" r="1"/><circle cx="1744.8" cy="547.6" r="1"/><circle cx="1766.4" cy="533.9" r="1"/><circle cx="1788.1" cy="520.1" r="1"/><circle cx="1809.7" cy="506.4" r="1"/><circle cx="1831.3" cy="492.6" r="1"/></g>
<polygon points="904.7,1009.7 906.1,1010.4 906.1,1032.8 904.7,1032.1" fill="rgb(255,255,255)" stroke="rgb(255,255,255)" stroke-width="0.6"/><polygon points="906.1,1010.4 907.8,1011 907.8,1033.6 906.1,1033" fill="rgb(249,249,249)" stroke="rgb(249,249,249)" stroke-width="0.6"/><polygon points="907.8,1011 909.5,1011.5 909.5,1034.3 907.8,1033.8" fill="rgb(171,171,171)" stroke="rgb(171,171,171)" stroke-width="0.6"/><polygon points="909.5,1011.5 911.4,1011.9 911.4,1034.9 909.5,1034.5" fill="rgb(170,170,170)" stroke="rgb(170,170,170)" stroke-width="0.6"/><polygon points="911.4,1011.9 913.3,1012.1 913.3,1035.3 911.4,1035.1" fill="rgb(169,169,169)" stroke="rgb(169,169,169)" stroke-width="0.6"/><polygon points="913.3,1012.1 915.3,1012.2 915.3,1035.6 913.3,1035.5" fill="rgb(168,168,168)" stroke="rgb(168,168,168)" stroke-width="0.6"/><polygon points="915.3,1012.2 917.3,1012.2 917.3,1035.8 915.3,1035.8" fill="rgb(167,167,167)" stroke="rgb(167,167,167)" stroke-width="0.6"/><polygon points="917.3,1012.2 919.3,1012 919.3,1035.8 917.3,1036" fill="rgb(166,166,166)" stroke="rgb(166,166,166)" stroke-width="0.6"/><polygon points="919.3,1012 921.3,1011.7 921.3,1035.7 919.3,1036" fill="rgb(170,170,170)" stroke="rgb(170,170,170)" stroke-width="0.6"/><polygon points="921.3,1011.7 923.3,1011.3 923.3,1035.4 921.3,1035.9" fill="rgb(174,174,174)" stroke="rgb(174,174,174)" stroke-width="0.6"/><polygon points="923.3,1011.3 925.1,1010.8 925.1,1035.1 923.3,1035.6" fill="rgb(179,179,179)" stroke="rgb(179,179,179)" stroke-width="0.6"/><polygon points="925.1,1010.8 926.9,1010.1 926.9,1034.6 925.1,1035.3" fill="rgb(184,184,184)" stroke="rgb(184,184,184)" stroke-width="0.6"/><polygon points="926.9,1010.1 928.6,1009.3 928.6,1034 926.9,1034.8" fill="rgb(188,188,188)" stroke="rgb(188,188,188)" stroke-width="0.6"/><polygon points="928.6,1009.3 930.1,1008.4 930.1,1033.3 928.6,1034.2" fill="rgb(193,193,193)" stroke="rgb(193,193,193)" stroke-width="0.6"/><polygon points="930.1,1008.4 1768.3,475.8 1768.3,500.8 930.1,1033.4" fill="rgb(196,196,196)" stroke="rgb(196,196,196)" stroke-width="0.6"/><polygon points="1768.3,475.8 1769.7,474.8 1769.7,499.8 1768.3,500.8" fill="rgb(196,196,196)" stroke="rgb(196,196,196)" stroke-width="0.6"/><polygon points="1769.7,474.8 1770.9,473.8 1770.9,498.8 1769.7,499.8" fill="rgb(196,196,196)" stroke="rgb(196,196,196)" stroke-width="0.6"/><polygon points="1770.9,473.8 1771.9,472.7 1771.9,497.7 1770.9,498.8" fill="rgb(196,196,196)" stroke="rgb(196,196,196)" stroke-width="0.6"/><polygon points="1771.9,472.7 1772.7,471.5 1772.7,496.5 1771.9,497.7" fill="rgb(196,196,196)" stroke="rgb(196,196,196)" stroke-width="0.6"/><polygon points="1772.7,471.5 1773.3,470.4 1773.3,495.4 1772.7,496.5" fill="rgb(196,196,196)" stroke="rgb(196,196,196)" stroke-width="0.6"/><polygon points="1773.3,470.4 1773.7,469.2 1773.7,494.2 1773.3,495.4" fill="rgb(196,196,196)" stroke="rgb(196,196,196)" stroke-width="0.6"/><polygon points="1773.7,469.2 1773.8,467.9 1773.8,492.9 1773.7,494.2" fill="rgb(196,196,196)" stroke="rgb(196,196,196)" stroke-width="0.6"/><polygon points="1773.8,467.9 1773.7,466.7 1773.7,491.7 1773.8,492.9" fill="rgb(196,196,196)" stroke="rgb(196,196,196)" stroke-width="0.6"/><polygon points="560.5,811.6 560.3,812.8 560.3,835.1 560.5,833.9" fill="rgb(242,242,242)" stroke="rgb(242,242,242)" stroke-width="0.6"/><polygon points="560.3,812.8 560.4,814 560.4,836.3 560.3,835.1" fill="rgb(242,242,242)" stroke="rgb(242,242,242)" stroke-width="0.6"/><polygon points="560.4,814 560.7,815.1 560.7,837.4 560.4,836.3" fill="rgb(242,242,242)" stroke="rgb(242,242,242)" stroke-width="0.6"/><polygon points="560.7,815.1 561.2,816.3 561.2,838.6 560.7,837.4" fill="rgb(242,242,242)" stroke="rgb(242,242,242)" stroke-width="0.6"/><polygon points="561.2,816.3 562,817.3 562,839.6 561.2,838.6" fill="rgb(242,242,242)" stroke="rgb(242,242,242)" stroke-width="0.6"/><polygon points="562,817.3 562.9,818.3 562.9,840.6 562,839.6" fill="rgb(242,242,242)" stroke="rgb(242,242,242)" stroke-width="0.6"/><polygon points="562.9,818.3 564,819.3 564,841.6 562.9,840.6" fill="rgb(255,255,255)" stroke="rgb(255,255,255)" stroke-width="0.6"/><polygon points="564,819.3 565.3,820.1 565.3,842.4 564,841.6" fill="rgb(255,255,255)" stroke="rgb(255,255,255)" stroke-width="0.6"/><polygon points="565.3,820.1 904.7,1009.7 904.7,1032 565.3,842.4" fill="rgb(255,255,255)" stroke="rgb(255,255,255)" stroke-width="0.6"/>
<g fill="#4d4d4d" opacity="0.8"><circle cx="570.5" cy="846.1" r="1"/><circle cx="591.3" cy="857.7" r="1"/><circle cx="612.1" cy="869.4" r="1"/><circle cx="632.8" cy="881" r="1"/><circle cx="653.6" cy="892.6" r="1"/><circle cx="674.4" cy="904.2" r="1"/><circle cx="695.2" cy="915.9" r="1"/><circle cx="716.1" cy="927.5" r="1"/><circle cx="736.9" cy="939.1" r="1"/><circle cx="757.7" cy="950.7" r="1"/><circle cx="778.5" cy="962.4" r="1"/><circle cx="799.4" cy="974" r="1"/><circle cx="820.2" cy="985.7" r="1"/><circle cx="841" cy="997.3" r="1"/><circle cx="861.9" cy="1009" r="1"/><circle cx="882.7" cy="1020.6" r="1"/><circle cx="903.6" cy="1032.3" r="1"/><circle cx="924.5" cy="1043.9" r="1"/></g>
<path d="M704,960.6 L737.4,939" stroke="#7de03a" stroke-width="1.2" stroke-dasharray="4,1.5" opacity="0.85"/>
<path d="M1350.4,765.9 L1387.4,786.7" stroke="#e04040" stroke-width="1.2" stroke-dasharray="4,1.5" opacity="0.85"/>
<path d="M1620,378 L1634,370" stroke="#7de03a" stroke-width="1.2" stroke-dasharray="4,1.5" opacity="0.85"/>
<polygon points="904.7,1009.7 906.1,1010.4 907.8,1011 909.5,1011.5 911.4,1011.9 913.3,1012.1 915.3,1012.2 917.3,1012.2 919.3,1012 921.3,1011.7 923.3,1011.3 925.1,1010.8 926.9,1010.1 928.6,1009.3 930.1,1008.4 1768.3,475.8 1769.7,474.8 1770.9,473.8 1771.9,472.7 1772.7,471.5 1773.3,470.4 1773.7,469.2 1773.8,467.9 1773.7,466.7 1773.4,465.6 1772.9,464.4 1772.2,463.4 1771.2,462.4 1770.1,461.4 1768.7,460.6 1427.4,271.9 1426,271.2 1424.3,270.6 1422.6,270.1 1420.7,269.7 1418.8,269.5 1416.8,269.4 1414.8,269.4 1412.8,269.6 1410.8,269.9 1408.8,270.3 1406.9,270.9 1405.2,271.6 1403.5,272.3 1402,273.2 565.8,804.9 564.4,805.9 563.2,806.9 562.2,808 561.4,809.2 560.8,810.4 560.5,811.6 560.3,812.8 560.4,814 560.7,815.1 561.2,816.3 562,817.3 562.9,818.3 564,819.3 565.3,820.1" fill="#d9d9d9"/>
<use href="#hl" transform="translate(610.8,819.8) scale(1.003)"/><use href="#hl" transform="translate(653.9,792.4) scale(1.003)"/><use href="#hl" transform="translate(696.9,765) scale(1.003)"/><use href="#hl" transform="translate(740,737.6) scale(1.003)"/><use href="#hl" transform="translate(783.1,710.2) scale(1.003)"/><use href="#hl" transform="translate(826.2,682.8) scale(1.003)"/><use href="#hl" transform="translate(869.3,655.4) scale(1.003)"/><use href="#hl" transform="translate(912.4,628) scale(1.004)"/><use href="#hl" transform="translate(955.5,600.6) scale(1.004)"/><use href="#hl" transform="translate(998.6,573.2) scale(1.004)"/><use href="#hl" transform="translate(1041.7,545.8) scale(1.004)"/><use href="#hl" transform="translate(1084.8,518.3) scale(1.004)"/><use href="#hl" transform="translate(1128,490.9) scale(1.004)"/><use href="#hl" transform="translate(1171.1,463.5) scale(1.004)"/><use href="#hl" transform="translate(1214.2,436.1) scale(1.004)"/><use href="#hl" transform="translate(1257.3,408.7) scale(1.005)"/><use href="#hl" transform="translate(1300.5,381.2) scale(1.005)"/><use href="#hl" transform="translate(1343.6,353.8) scale(1.005)"/><use href="#hl" transform="translate(1386.8,326.4) scale(1.005)"/><use href="#hl" transform="translate(1429.9,298.9) scale(1.005)"/><use href="#hl" transform="translate(652.4,843) scale(1.003)"/><use href="#hl" transform="translate(695.4,815.6) scale(1.003)"/><use href="#hl" transform="translate(738.5,788.2) scale(1.003)"/><use href="#hl" transform="translate(781.6,760.8) scale(1.003)"/><use href="#hl" transform="translate(824.7,733.4) scale(1.004)"/><use href="#hl" transform="translate(867.8,706) scale(1.004)"/><use href="#hl" transform="translate(911,678.6) scale(1.004)"/><use href="#hl" transform="translate(954.1,651.2) scale(1.004)"/><use href="#hl" transform="translate(997.2,623.8) scale(1.004)"/><use href="#hl" transform="translate(1040.3,596.3) scale(1.004)"/><use href="#hl" transform="translate(1083.4,568.9) scale(1.004)"/><use href="#hl" transform="translate(1126.5,541.5) scale(1.004)"/><use href="#hl" transform="translate(1169.7,514.1) scale(1.005)"/><use href="#hl" transform="translate(1212.8,486.7) scale(1.005)"/><use href="#hl" transform="translate(1256,459.2) scale(1.005)"/><use href="#hl" transform="translate(1299.1,431.8) scale(1.005)"/><use href="#hl" transform="translate(1342.2,404.4) scale(1.005)"/><use href="#hl" transform="translate(1385.4,376.9) scale(1.005)"/><use href="#hl" transform="translate(1428.5,349.5) scale(1.005)"/><use href="#hl" transform="translate(1471.7,322.1) scale(1.005)"/><use href="#hl" transform="translate(694,866.2) scale(1.003)"/><use href="#hl" transform="translate(737.1,838.8) scale(1.004)"/><use href="#hl" transform="translate(780.2,811.4) scale(1.004)"/><use href="#hl" transform="translate(823.3,784) scale(1.004)"/><use href="#hl" transform="translate(866.4,756.6) scale(1.004)"/><use href="#hl" transform="translate(909.5,729.2) scale(1.004)"/><use href="#hl" transform="translate(952.6,701.8) scale(1.004)"/><use href="#hl" transform="translate(995.7,674.4) scale(1.004)"/><use href="#hl" transform="translate(1038.9,646.9) scale(1.004)"/><use href="#hl" transform="translate(1082,619.5) scale(1.005)"/><use href="#hl" transform="translate(1125.1,592.1) scale(1.005)"/><use href="#hl" transform="translate(1168.3,564.7) scale(1.005)"/><use href="#hl" transform="translate(1211.4,537.2) scale(1.005)"/><use href="#hl" transform="translate(1254.6,509.8) scale(1.005)"/><use href="#hl" transform="translate(1297.7,482.4) scale(1.005)"/><use href="#hl" transform="translate(1340.9,455) scale(1.005)"/><use href="#hl" transform="translate(1384,427.5) scale(1.005)"/><use href="#hl" transform="translate(1427.2,400.1) scale(1.006)"/><use href="#hl" transform="translate(1470.4,372.6) scale(1.006)"/><use href="#hl" transform="translate(1513.5,345.2) scale(1.006)"/><use href="#hl" transform="translate(735.6,889.5) scale(1.004)"/><use href="#hl" transform="translate(778.7,862.1) scale(1.004)"/><use href="#hl" transform="translate(821.8,834.7) scale(1.004)"/><use href="#hl" transform="translate(864.9,807.2) scale(1.004)"/><use href="#hl" transform="translate(908.1,779.8) scale(1.004)"/><use href="#hl" transform="translate(951.2,752.4) scale(1.004)"/><use href="#hl" transform="translate(994.3,725) scale(1.005)"/><use href="#hl" transform="translate(1037.5,697.6) scale(1.005)"/><use href="#hl" transform="translate(1080.6,670.1) scale(1.005)"/><use href="#hl" transform="translate(1123.7,642.7) scale(1.005)"/><use href="#hl" transform="translate(1166.9,615.3) scale(1.005)"/><use href="#hl" transform="translate(1210,587.9) scale(1.005)"/><use href="#hl" transform="translate(1253.2,560.4) scale(1.005)"/><use href="#hl" transform="translate(1296.4,533) scale(1.005)"/><use href="#hl" transform="translate(1339.5,505.6) scale(1.006)"/><use href="#hl" transform="translate(1382.7,478.1) scale(1.006)"/><use href="#hl" transform="translate(1425.9,450.7) scale(1.006)"/><use href="#hl" transform="translate(1469,423.2) scale(1.006)"/><use href="#hl" transform="translate(1512.2,395.8) scale(1.006)"/><use href="#hl" transform="translate(1555.4,368.3) scale(1.006)"/><use href="#hl" transform="translate(777.2,912.7) scale(1.004)"/><use href="#hl" transform="translate(820.3,885.3) scale(1.004)"/><use href="#hl" transform="translate(863.5,857.9) scale(1.004)"/><use href="#hl" transform="translate(906.6,830.5) scale(1.005)"/><use href="#hl" transform="translate(949.7,803.1) scale(1.005)"/><use href="#hl" transform="translate(992.9,775.6) scale(1.005)"/><use href="#hl" transform="translate(1036,748.2) scale(1.005)"/><use href="#hl" transform="translate(1079.2,720.8) scale(1.005)"/><use href="#hl" transform="translate(1122.3,693.4) scale(1.005)"/><use href="#hl" transform="translate(1165.5,665.9) scale(1.005)"/><use href="#hl" transform="translate(1208.6,638.5) scale(1.005)"/><use href="#hl" transform="translate(1251.8,611.1) scale(1.006)"/><use href="#hl" transform="translate(1295,583.6) scale(1.006)"/><use href="#hl" transform="translate(1338.1,556.2) scale(1.006)"/><use href="#hl" transform="translate(1381.3,528.7) scale(1.006)"/><use href="#hl" transform="translate(1424.5,501.3) scale(1.006)"/><use href="#hl" transform="translate(1467.7,473.8) scale(1.006)"/><use href="#hl" transform="translate(1510.9,446.4) scale(1.006)"/><use href="#hl" transform="translate(1554.1,418.9) scale(1.006)"/><use href="#hl" transform="translate(1597.3,391.5) scale(1.007)"/><use href="#hl" transform="translate(818.9,936) scale(1.005)"/><use href="#hl" transform="translate(862,908.6) scale(1.005)"/><use href="#hl" transform="translate(905.2,881.2) scale(1.005)"/><use href="#hl" transform="translate(948.3,853.7) scale(1.005)"/><use href="#hl" transform="translate(991.5,826.3) scale(1.005)"/><use href="#hl" transform="translate(1034.6,798.9) scale(1.005)"/><use href="#hl" transform="translate(1077.8,771.5) scale(1.005)"/><use href="#hl" transform="translate(1120.9,744) scale(1.005)"/><use href="#hl" transform="translate(1164.1,716.6) scale(1.006)"/><use href="#hl" transform="translate(1207.3,689.2) scale(1.006)"/><use href="#hl" transform="translate(1250.4,661.7) scale(1.006)"/><use href="#hl" transform="translate(1293.6,634.3) scale(1.006)"/><use href="#hl" transform="translate(1336.8,606.8) scale(1.006)"/><use href="#hl" transform="translate(1380,579.4) scale(1.006)"/><use href="#hl" transform="translate(1423.2,551.9) scale(1.006)"/><use href="#hl" transform="translate(1466.3,524.5) scale(1.006)"/><use href="#hl" transform="translate(1509.5,497) scale(1.007)"/><use href="#hl" transform="translate(1552.7,469.6) scale(1.007)"/><use href="#hl" transform="translate(1595.9,442.1) scale(1.007)"/><use href="#hl" transform="translate(1639.1,414.6) scale(1.007)"/><use href="#hl" transform="translate(860.6,959.3) scale(1.005)"/><use href="#hl" transform="translate(903.7,931.9) scale(1.005)"/><use href="#hl" transform="translate(946.9,904.4) scale(1.005)"/><use href="#hl" transform="translate(990,877) scale(1.005)"/><use href="#hl" transform="translate(1033.2,849.6) scale(1.005)"/><use href="#hl" transform="translate(1076.3,822.1) scale(1.006)"/><use href="#hl" transform="translate(1119.5,794.7) scale(1.006)"/><use href="#hl" transform="translate(1162.7,767.3) scale(1.006)"/><use href="#hl" transform="translate(1205.9,739.8) scale(1.006)"/><use href="#hl" transform="translate(1249,712.4) scale(1.006)"/><use href="#hl" transform="translate(1292.2,684.9) scale(1.006)"/><use href="#hl" transform="translate(1335.4,657.5) scale(1.006)"/><use href="#hl" transform="translate(1378.6,630) scale(1.006)"/><use href="#hl" transform="translate(1421.8,602.6) scale(1.007)"/><use href="#hl" transform="translate(1465,575.1) scale(1.007)"/><use href="#hl" transform="translate(1508.2,547.7) scale(1.007)"/><use href="#hl" transform="translate(1551.4,520.2) scale(1.007)"/><use href="#hl" transform="translate(1594.6,492.8) scale(1.007)"/><use href="#hl" transform="translate(1637.8,465.3) scale(1.007)"/><use href="#hl" transform="translate(1681.1,437.8) scale(1.007)"/><use href="#hl" transform="translate(902.3,982.6) scale(1.005)"/><use href="#hl" transform="translate(945.4,955.1) scale(1.005)"/><use href="#hl" transform="translate(988.6,927.7) scale(1.006)"/><use href="#hl" transform="translate(1031.8,900.3) scale(1.006)"/><use href="#hl" transform="translate(1074.9,872.8) scale(1.006)"/><use href="#hl" transform="translate(1118.1,845.4) scale(1.006)"/><use href="#hl" transform="translate(1161.3,818) scale(1.006)"/><use href="#hl" transform="translate(1204.5,790.5) scale(1.006)"/><use href="#hl" transform="translate(1247.7,763.1) scale(1.006)"/><use href="#hl" transform="translate(1290.9,735.6) scale(1.006)"/><use href="#hl" transform="translate(1334,708.2) scale(1.007)"/><use href="#hl" transform="translate(1377.2,680.7) scale(1.007)"/><use href="#hl" transform="translate(1420.5,653.3) scale(1.007)"/><use href="#hl" transform="translate(1463.7,625.8) scale(1.007)"/><use href="#hl" transform="translate(1506.9,598.3) scale(1.007)"/><use href="#hl" transform="translate(1550.1,570.9) scale(1.007)"/><use href="#hl" transform="translate(1593.3,543.4) scale(1.007)"/><use href="#hl" transform="translate(1636.5,516) scale(1.007)"/><use href="#hl" transform="translate(1679.8,488.5) scale(1.008)"/><use href="#hl" transform="translate(1723,461) scale(1.008)"/>
<path d="M800.8,582.8 C802.4,580.9 804.8,577.3 810.6,571.7 C816.4,566.1 826.8,556.6 835.6,549.4 C844.4,542.2 854,534.9 863.3,528.6 C872.5,522.4 883.2,515.8 891.1,511.9 C899,508 902.3,507.1 910.6,505 C918.9,502.9 932.7,501.7 941,499.4 C949.3,497.1 950.8,494.2 960.6,491 C970.4,487.8 988.9,483.8 1000,480 C1011.1,476.2 1016.3,472.3 1027,468.5 C1037.7,464.7 1055.7,459.9 1064,457.4 C1072.3,454.9 1072.3,455.4 1077,453.7 C1081.7,452 1084.8,449.7 1091.9,447.2 C1099,444.7 1111,441.8 1119.6,438.9 C1128.2,436 1137,432.6 1143.7,429.6 C1150.4,426.6 1154.8,425.1 1160,421 C1165.2,416.9 1168.3,412.7 1175,405 C1181.7,397.3 1192.5,385.4 1200,375 C1207.5,364.6 1215,352.5 1220,342.5 C1225,332.5 1227.3,322.8 1230,315 C1232.7,307.2 1233.3,300.9 1236,296 C1238.7,291.1 1240.8,288.8 1246,285.5 C1251.2,282.2 1258.1,281.5 1267,276.5 C1275.9,271.5 1291.8,260.2 1299.6,255.6 C1307.3,251 1306.8,252.8 1313.5,248.7 C1320.2,244.5 1331,236.8 1340,230.7 C1349,224.6 1358.5,218 1367.8,212.2 C1377.1,206.3 1387.1,199.1 1395.6,195.6 C1404.1,192.1 1411,191.5 1418.7,191.2 C1426.4,190.9 1435,192 1441.9,193.7 C1448.9,195.3 1454.1,198 1460.4,201.1 C1466.8,204.2 1472.1,206.3 1480,212.2 C1487.9,218.1 1498.5,227.2 1508,236.5 C1517.5,245.8 1528.3,257.1 1537,268 C1545.7,278.9 1553.5,290.5 1560,302 C1566.5,313.5 1572.2,326.5 1576,337 C1579.8,347.5 1581,357.3 1582.5,365 C1584,372.7 1584.2,378.9 1584.7,383 C1585.2,387.1 1585.1,388.3 1585.2,389.4 L1565,400.8 L1560,400 L1558.3,406.7 L1557.9,409.8 C1556.6,411.7 1553.4,416.9 1550,421 C1546.6,425.1 1547.1,427.3 1537.4,434.2 C1527.7,441.1 1499.3,457.8 1491.7,462.5 C1491.6,464.1 1491.5,467.8 1491,472 C1490.5,476.2 1490,482.2 1488.6,487.7 C1487.1,493.2 1484.7,500.3 1482.3,505 C1479.9,509.7 1475.7,514.2 1474.4,516 L1390.6,572.5 C1388.7,573.2 1383,576.6 1379.2,577 C1375.4,577.4 1373.4,577.5 1367.7,574.8 C1362,572.1 1352,566.4 1344.8,561 C1337.5,555.6 1331.8,548 1324.2,542.7 C1316.6,537.4 1308.9,532.6 1299,529 C1289.1,525.4 1278,522.2 1264.6,521 C1251.2,519.8 1233.6,520.6 1218.7,522 C1203.8,523.4 1182.5,528.3 1175.2,529.6 L1175.2,548.1 C1174.3,549 1172.7,552.8 1169.6,553.7 C1166.5,554.6 1161,554.6 1156.7,553.7 C1152.4,552.8 1147.4,549 1143.7,548.1 C1140,547.2 1141.5,546.2 1134.4,548.1 C1127.3,550 1112.7,555.3 1101,559.3 C1089.3,563.3 1076.3,567.9 1064,572.2 C1051.7,576.5 1039.3,581.5 1027,585.2 C1014.7,588.9 1003,591.5 990,594.6 C977,597.7 955.8,602.4 948.9,603.9 C950,607.1 953.6,617.3 955.6,623.3 C957.6,629.3 959.4,633.9 960.6,640 C961.8,646.1 961.4,651 962.8,660 C964.2,669 967.9,682.2 968.9,693.9 C969.9,705.6 970.3,721.7 968.9,730 C967.5,738.3 966.1,738.8 960.6,743.9 C955.1,749 944.9,756.9 935.6,760.6 C926.3,764.3 914.7,765.8 905,766 C895.3,766.2 884,763.5 877.2,762 C870.4,760.5 867.7,759.7 864,757 C860.3,754.3 857.6,752.4 854.8,745.9 C852,739.4 851.4,728.9 847.4,718.1 C843.4,707.3 836.3,694.4 830.7,681.1 C825.1,667.8 818.9,653.3 814,638.5 C809.1,623.7 803.3,601.5 801.1,592.2 C798.9,582.9 800.8,584.4 800.8,582.8 Z" fill="#b5892d"/>
<path d="M943.3,593.9 C946.1,592.4 952.2,587.8 960,585 C967.8,582.2 980,579.6 990,577 C1000,574.4 1007.7,573 1020,569.4 C1032.3,565.8 1050.5,560.1 1064,555.6 C1077.5,551.1 1090.2,546.3 1101,542.6 C1111.8,538.9 1122.7,535 1128.9,533.3 C1135.1,531.6 1134.3,531.6 1138,532.4 C1141.7,533.2 1146,536.3 1151,538 C1156,539.7 1163.8,542.1 1167.8,542.6 C1171.8,543.1 1173.8,541 1175,540.7 L1175.2,548.1 C1174.3,549 1172.7,552.8 1169.6,553.7 C1166.5,554.6 1161,554.6 1156.7,553.7 C1152.4,552.8 1147.4,549 1143.7,548.1 C1140,547.2 1141.5,546.2 1134.4,548.1 C1127.3,550 1112.7,555.3 1101,559.3 C1089.3,563.3 1076.3,567.9 1064,572.2 C1051.7,576.5 1039.3,581.5 1027,585.2 C1014.7,588.9 1003,591.5 990,594.6 C977,597.7 955.8,602.4 948.9,603.9 L943.3,593.9 Z" fill="url(#ybandg)"/>
<path d="M1161.5,510.6 C1167.2,508.3 1184.3,500.1 1195.8,496.9 C1207.2,493.6 1217.8,492.2 1230.2,491.1 C1242.6,490 1258.5,489.4 1270,490 C1281.5,490.6 1294.2,493.8 1299,494.6 L1301.2,508.3 C1295.1,508.2 1278.3,507.4 1264.6,508 C1250.8,508.6 1232.8,509.7 1218.7,512 C1204.6,514.3 1187.3,519.1 1180,522 C1172.7,524.9 1175.8,528.3 1175,529.6 L1161.5,510.6 Z" fill="#dba83a"/>
<path d="M1221,493.5 L1255.6,490.6 L1281.5,505.6 L1244.4,504.6 Z" fill="#b58a2e"/>
<path d="M1294,494 L1300,494.4 L1302,515.6 L1296,507 Z" fill="#c39430"/>
<path d="M801.1,592.2 C803.2,599.9 809.1,623.7 814,638.5 C818.9,653.3 825.1,667.8 830.7,681.1 C836.3,694.4 843.4,707.3 847.4,718.1 C851.4,728.9 852,739.4 854.8,745.9 C857.6,752.4 860.3,754.3 864,757 C867.7,759.7 870.4,760.5 877.2,762 C884,763.5 895.3,766.2 905,766 C914.7,765.8 926.3,764.3 935.6,760.6 C944.9,756.9 955.1,749 960.6,743.9 C966.1,738.8 967.5,738.3 968.9,730 C970.3,721.7 968.9,699.9 968.9,693.9 C962.9,698.5 943.4,716.2 932.8,721.7 C922.1,727.2 912.1,726.6 905,727.2 C897.9,727.9 896.2,727.1 890,725.6 C883.8,724.1 874.3,721.2 867.8,718.1 C861.3,715 855.1,711.6 851.1,707 C847.1,702.4 846.8,697.2 843.7,690.4 C840.6,683.6 836.9,676.2 832.6,666.3 C828.3,656.4 822.9,643 817.8,631 C812.7,619 804.8,600.5 802,594 C799.2,587.5 801.2,592.5 801.1,592.2 Z" fill="url(#hookyg)"/>
<path d="M1390.6,515.2 L1430,492 L1473,472 L1474.4,516 L1390.6,577 Z" fill="#ad832a"/>
<path d="M1474.4,478.2 L1491,468 L1488.6,487.7 L1482.3,505 L1474.4,516 Z" fill="#a87c26"/>
<path d="M1429.6,522.3 L1465,493.2 L1471.3,496.3 L1431,525.5 Z" fill="#dcaa3a"/>
<path d="M1430.4,494 L1443,500.3 L1441,503 L1430,497 Z" fill="#dcaa3a"/>
<path d="M1471.3,463.3 C1476.1,460.4 1490.3,452.4 1500,446 C1509.7,439.6 1519.8,431.1 1529.5,424.7 C1539.2,418.3 1553.2,410.4 1557.9,407.5 L1550,421 C1547.9,423.2 1547.1,427.3 1537.4,434.2 C1527.7,441.1 1499.3,457.8 1491.7,462.5 L1471.3,468 Z" fill="#bb8d2e"/>
<clipPath id="bodyclip"><path d="M800.8,582.8 C802.4,580.9 804.8,577.3 810.6,571.7 C816.4,566.1 826.8,556.6 835.6,549.4 C844.4,542.2 854,534.9 863.3,528.6 C872.5,522.4 883.2,515.8 891.1,511.9 C899,508 902.3,507.1 910.6,505 C918.9,502.9 932.7,501.7 941,499.4 C949.3,497.1 950.8,494.2 960.6,491 C970.4,487.8 988.9,483.8 1000,480 C1011.1,476.2 1016.3,472.3 1027,468.5 C1037.7,464.7 1055.7,459.9 1064,457.4 C1072.3,454.9 1072.3,455.4 1077,453.7 C1081.7,452 1084.8,449.7 1091.9,447.2 C1099,444.7 1111,441.8 1119.6,438.9 C1128.2,436 1137,432.6 1143.7,429.6 C1150.4,426.6 1154.8,425.1 1160,421 C1165.2,416.9 1168.3,412.7 1175,405 C1181.7,397.3 1192.5,385.4 1200,375 C1207.5,364.6 1215,352.5 1220,342.5 C1225,332.5 1227.3,322.8 1230,315 C1232.7,307.2 1233.3,300.9 1236,296 C1238.7,291.1 1240.8,288.8 1246,285.5 C1251.2,282.2 1258.1,281.5 1267,276.5 C1275.9,271.5 1291.8,260.2 1299.6,255.6 C1307.3,251 1306.8,252.8 1313.5,248.7 C1320.2,244.5 1331,236.8 1340,230.7 C1349,224.6 1358.5,218 1367.8,212.2 C1377.1,206.3 1387.1,199.1 1395.6,195.6 C1404.1,192.1 1411,191.5 1418.7,191.2 C1426.4,190.9 1435,192 1441.9,193.7 C1448.9,195.3 1454.1,198 1460.4,201.1 C1466.8,204.2 1472.1,206.3 1480,212.2 C1487.9,218.1 1498.5,227.2 1508,236.5 C1517.5,245.8 1528.3,257.1 1537,268 C1545.7,278.9 1553.5,290.5 1560,302 C1566.5,313.5 1572.2,326.5 1576,337 C1579.8,347.5 1581,357.3 1582.5,365 C1584,372.7 1584.2,378.9 1584.7,383 C1585.2,387.1 1585.1,388.3 1585.2,389.4 L1565,400.8 L1560,400 L1558.3,406.7 L1557.9,407.5 C1553.3,409.8 1540.1,415.1 1530.4,421.2 C1520.8,427.3 1509.8,437 1500,444 C1490.2,451 1476.1,460.1 1471.3,463.3 L1468.1,461 L1463.4,443.6 L1447.7,435.7 L1422.5,451.5 L1430.4,490.8 L1391,514.4 L1380,514.4 C1373.3,513.8 1353.1,512 1340,511 C1326.9,510 1307.7,508.8 1301.2,508.3 L1299,494.6 C1294.2,493.8 1281.5,490.6 1270,490 C1258.5,489.4 1242.6,490 1230.2,491.1 C1217.8,492.2 1207.2,493.6 1195.8,496.9 C1184.3,500.1 1167.2,508.3 1161.5,510.6 C1162.6,512.5 1165.8,517 1168,522 C1170.2,527 1173.8,537.6 1175,540.7 C1173.8,541 1171.8,543.1 1167.8,542.6 C1163.8,542.1 1156,539.7 1151,538 C1146,536.3 1141.7,533.2 1138,532.4 C1134.3,531.6 1135.1,531.6 1128.9,533.3 C1122.7,535 1111.8,538.9 1101,542.6 C1090.2,546.3 1077.5,551.1 1064,555.6 C1050.5,560.1 1032.3,565.8 1020,569.4 C1007.7,573 1000,574.4 990,577 C980,579.6 967.8,582.2 960,585 C952.2,587.8 946.1,592.4 943.3,593.9 C944.2,595.6 946.8,599 948.9,603.9 C951,608.8 953.6,617.3 955.6,623.3 C957.6,629.3 959.4,633.9 960.6,640 C961.8,646.1 961.9,651 962.8,660 C963.7,669 965.5,688.3 966,694 C960.5,698.6 943,716.2 932.8,721.7 C922.6,727.2 912.1,726.6 905,727.2 C897.9,727.9 896.2,727.1 890,725.6 C883.8,724.1 874.3,721.2 867.8,718.1 C861.3,715 855.1,711.6 851.1,707 C847.1,702.4 846.8,697.2 843.7,690.4 C840.6,683.6 836.9,676.2 832.6,666.3 C828.3,656.4 822.9,643 817.8,631 C812.7,619 804.8,602 802,594 C799.2,586 801,584.7 800.8,582.8 Z"/></clipPath>
<path d="M800.8,582.8 C802.4,580.9 804.8,577.3 810.6,571.7 C816.4,566.1 826.8,556.6 835.6,549.4 C844.4,542.2 854,534.9 863.3,528.6 C872.5,522.4 883.2,515.8 891.1,511.9 C899,508 902.3,507.1 910.6,505 C918.9,502.9 932.7,501.7 941,499.4 C949.3,497.1 950.8,494.2 960.6,491 C970.4,487.8 988.9,483.8 1000,480 C1011.1,476.2 1016.3,472.3 1027,468.5 C1037.7,464.7 1055.7,459.9 1064,457.4 C1072.3,454.9 1072.3,455.4 1077,453.7 C1081.7,452 1084.8,449.7 1091.9,447.2 C1099,444.7 1111,441.8 1119.6,438.9 C1128.2,436 1137,432.6 1143.7,429.6 C1150.4,426.6 1154.8,425.1 1160,421 C1165.2,416.9 1168.3,412.7 1175,405 C1181.7,397.3 1192.5,385.4 1200,375 C1207.5,364.6 1215,352.5 1220,342.5 C1225,332.5 1227.3,322.8 1230,315 C1232.7,307.2 1233.3,300.9 1236,296 C1238.7,291.1 1240.8,288.8 1246,285.5 C1251.2,282.2 1258.1,281.5 1267,276.5 C1275.9,271.5 1291.8,260.2 1299.6,255.6 C1307.3,251 1306.8,252.8 1313.5,248.7 C1320.2,244.5 1331,236.8 1340,230.7 C1349,224.6 1358.5,218 1367.8,212.2 C1377.1,206.3 1387.1,199.1 1395.6,195.6 C1404.1,192.1 1411,191.5 1418.7,191.2 C1426.4,190.9 1435,192 1441.9,193.7 C1448.9,195.3 1454.1,198 1460.4,201.1 C1466.8,204.2 1472.1,206.3 1480,212.2 C1487.9,218.1 1498.5,227.2 1508,236.5 C1517.5,245.8 1528.3,257.1 1537,268 C1545.7,278.9 1553.5,290.5 1560,302 C1566.5,313.5 1572.2,326.5 1576,337 C1579.8,347.5 1581,357.3 1582.5,365 C1584,372.7 1584.2,378.9 1584.7,383 C1585.2,387.1 1585.1,388.3 1585.2,389.4 L1565,400.8 L1560,400 L1558.3,406.7 L1557.9,407.5 C1553.3,409.8 1540.1,415.1 1530.4,421.2 C1520.8,427.3 1509.8,437 1500,444 C1490.2,451 1476.1,460.1 1471.3,463.3 L1468.1,461 L1463.4,443.6 L1447.7,435.7 L1422.5,451.5 L1430.4,490.8 L1391,514.4 L1380,514.4 C1373.3,513.8 1353.1,512 1340,511 C1326.9,510 1307.7,508.8 1301.2,508.3 L1299,494.6 C1294.2,493.8 1281.5,490.6 1270,490 C1258.5,489.4 1242.6,490 1230.2,491.1 C1217.8,492.2 1207.2,493.6 1195.8,496.9 C1184.3,500.1 1167.2,508.3 1161.5,510.6 C1162.6,512.5 1165.8,517 1168,522 C1170.2,527 1173.8,537.6 1175,540.7 C1173.8,541 1171.8,543.1 1167.8,542.6 C1163.8,542.1 1156,539.7 1151,538 C1146,536.3 1141.7,533.2 1138,532.4 C1134.3,531.6 1135.1,531.6 1128.9,533.3 C1122.7,535 1111.8,538.9 1101,542.6 C1090.2,546.3 1077.5,551.1 1064,555.6 C1050.5,560.1 1032.3,565.8 1020,569.4 C1007.7,573 1000,574.4 990,577 C980,579.6 967.8,582.2 960,585 C952.2,587.8 946.1,592.4 943.3,593.9 C944.2,595.6 946.8,599 948.9,603.9 C951,608.8 953.6,617.3 955.6,623.3 C957.6,629.3 959.4,633.9 960.6,640 C961.8,646.1 961.9,651 962.8,660 C963.7,669 965.5,688.3 966,694 C960.5,698.6 943,716.2 932.8,721.7 C922.6,727.2 912.1,726.6 905,727.2 C897.9,727.9 896.2,727.1 890,725.6 C883.8,724.1 874.3,721.2 867.8,718.1 C861.3,715 855.1,711.6 851.1,707 C847.1,702.4 846.8,697.2 843.7,690.4 C840.6,683.6 836.9,676.2 832.6,666.3 C828.3,656.4 822.9,643 817.8,631 C812.7,619 804.8,602 802,594 C799.2,586 801,584.7 800.8,582.8 Z" fill="url(#blueg)"/>
<path d="M800.8,582.8 C802.7,584.3 807.8,585.6 812,592 C816.2,598.4 821.2,610.5 826,621 C830.8,631.5 835.4,645.3 840.7,655 C846,664.7 850.5,673.7 858,679 C865.5,684.3 876.8,685.7 885.6,687 C894.4,688.3 902.3,688.2 910.6,687 C918.9,685.8 927.7,684 935.6,680 C943.5,676 953.3,667.5 957.8,663.3 C962.3,659.1 962,656.4 962.8,655 C963.3,661.5 965.5,687.5 966,694 C960.5,698.6 943,716.2 932.8,721.7 C922.6,727.2 912.1,726.6 905,727.2 C897.9,727.9 896.2,727.1 890,725.6 C883.8,724.1 874.3,721.2 867.8,718.1 C861.3,715 855.1,711.6 851.1,707 C847.1,702.4 846.8,697.2 843.7,690.4 C840.6,683.6 836.9,676.2 832.6,666.3 C828.3,656.4 822.9,643 817.8,631 C812.7,619 804.8,602 802,594 C799.2,586 801,584.7 800.8,582.8 Z" fill="#1f5064"/>
<path d="M859,660 Q870,624 905,623 Q940,624 947,652 Q936,633 903,632 Q872,634 859,660Z" fill="#1f5165"/>
<path d="M874,662 Q880,642 903,641 Q928,642 933,658 Q920,648 903,648 Q884,649 874,662Z" fill="#1f5165"/>
<ellipse cx="903.6" cy="660" rx="29.5" ry="16" fill="#d9a63a" transform="rotate(-6 903.6 660)"/>
<path d="M875,664.5 Q897,655 932.5,654.8 Q931,649.5 921,646.2 Q910,643.8 906,645 Q902,652 875,664.5Z" fill="#b48a2e"/>
<ellipse cx="829" cy="564.5" rx="12" ry="6.5" fill="#1f5064" transform="rotate(-25 829 564.5)"/>
<path d="M1240,290 C1245,288.1 1260,278.8 1270,278.8 C1280,278.8 1290.8,284 1300,290 C1309.2,296 1316.7,305 1325,315 C1333.3,325 1342.5,335.8 1350,350 C1357.5,364.2 1364.6,383.3 1370,400 C1375.4,416.7 1379.2,433.8 1382.5,450 C1385.8,466.2 1388.5,487.1 1390,497.5 C1391.5,507.9 1391,510 1391.2,512.5 C1382.7,512.2 1355,511.7 1340,511 C1325,510.3 1307.7,508.8 1301.2,508.3 L1299,494.6 C1294.2,493.8 1281.5,490.6 1270,490 C1258.5,489.4 1242.6,490 1230.2,491.1 C1217.8,492.2 1207.2,493.6 1195.8,496.9 C1184.3,500.1 1167.2,508.3 1161.5,510.6 L1140,470 L1150,425 C1154.2,421.7 1166.7,413.3 1175,405 C1183.3,396.7 1192.5,385.4 1200,375 C1207.5,364.6 1215,352.5 1220,342.5 C1225,332.5 1227.3,322.8 1230,315 C1232.7,307.2 1234.3,300.2 1236,296 C1237.7,291.8 1239.3,291 1240,290 Z" fill="url(#shg)" clip-path="url(#bodyclip)"/>
<path d="M1129,486.5 C1132.6,488.8 1144.9,495.9 1150.7,500.4 C1156.5,504.9 1160.2,508.8 1163.7,513.3 C1167.2,517.8 1169.6,522.9 1171.5,527.6 C1173.4,532.3 1174.4,539.2 1175,541.5 C1174.2,541.5 1173,543 1170.2,541.8 C1167.5,540.5 1162.2,537.2 1158.5,534 C1154.8,530.8 1151.5,527.6 1148,522.4 C1144.5,517.2 1141,509 1137.8,503 C1134.6,497 1130.5,489.2 1129,486.5 Z" fill="url(#toothg)"/>
<rect x="1100" y="180" width="500" height="360" fill="url(#drumg)" clip-path="url(#bodyclip)"/>
<path d="M1447.7,435.7 L1465,424.7 L1471.3,463.3 L1468.1,461 L1463.4,443.6 Z" fill="#1d4b5f"/>
<path d="M1340,230.7 C1344.6,230.5 1358.5,228.6 1367.8,229.8 C1377.1,231 1386.3,233.9 1395.6,238.1 C1404.8,242.3 1414.1,248.9 1423.3,254.8 C1432.5,260.7 1444,268 1451,273.3 C1458,278.6 1458.5,279.2 1465,286.7 C1471.5,294.2 1482.5,307.2 1490,318.3 C1497.5,329.4 1504.2,341.9 1510,353.3 C1515.8,364.7 1521.2,375.6 1525,386.7 C1528.8,397.8 1531.2,414.4 1532.5,420" stroke="#1d4a5d" stroke-width="4" opacity="0.25" fill="none" transform="translate(-1.5,1)"/>
<path d="M1340,230.7 C1344.6,230.5 1358.5,228.6 1367.8,229.8 C1377.1,231 1386.3,233.9 1395.6,238.1 C1404.8,242.3 1414.1,248.9 1423.3,254.8 C1432.5,260.7 1444,268 1451,273.3 C1458,278.6 1458.5,279.2 1465,286.7 C1471.5,294.2 1482.5,307.2 1490,318.3 C1497.5,329.4 1504.2,341.9 1510,353.3 C1515.8,364.7 1521.2,375.6 1525,386.7 C1528.8,397.8 1531.2,414.4 1532.5,420" stroke="#1c4a5d" stroke-width="1.8" fill="none"/>
<path d="M1352,221.5 C1357,219.6 1372.9,211.5 1381.7,209.9 C1390.5,208.3 1396.3,210.3 1404.8,212.2 C1413.3,214.1 1422.6,216.9 1432.6,221.5 C1442.6,226.1 1455.4,233.3 1465,240 C1474.6,246.7 1481.7,253.4 1490,261.7 C1498.3,270 1507.2,279.7 1515,290 C1522.8,300.3 1530.3,312.2 1536.7,323.3 C1543.1,334.4 1549,345.6 1553.3,356.7 C1557.6,367.8 1560.7,382.6 1562.5,390 C1564.3,397.4 1563.9,399.2 1564.2,401" stroke="#1d4a5d" stroke-width="4" opacity="0.25" fill="none" transform="translate(-1.5,1)"/>
<path d="M1352,221.5 C1357,219.6 1372.9,211.5 1381.7,209.9 C1390.5,208.3 1396.3,210.3 1404.8,212.2 C1413.3,214.1 1422.6,216.9 1432.6,221.5 C1442.6,226.1 1455.4,233.3 1465,240 C1474.6,246.7 1481.7,253.4 1490,261.7 C1498.3,270 1507.2,279.7 1515,290 C1522.8,300.3 1530.3,312.2 1536.7,323.3 C1543.1,334.4 1549,345.6 1553.3,356.7 C1557.6,367.8 1560.7,382.6 1562.5,390 C1564.3,397.4 1563.9,399.2 1564.2,401" stroke="#1c4a5d" stroke-width="1.8" fill="none"/>
<ellipse cx="1077.6" cy="497.1" rx="13.6" ry="12.3" fill="url(#holebg)"/>
<ellipse cx="1380.6" cy="390" rx="13" ry="17" fill="url(#holebg)" transform="rotate(-30 1380.6 390)"/>
<path d="M1484.2,298 Q1488,284 1497,285.8 Q1507,289 1510.5,307 Q1503,294 1495,292 Q1488,292 1484.2,298Z" fill="#1d4b5e"/>
<circle cx="1148" cy="451" r="7.5" fill="none" stroke="#173644" stroke-width="1.6"/>
<circle cx="1159.8" cy="576.3" r="8" fill="#e6d5ad" stroke="#7a7060" stroke-width="1.2"/>
<circle cx="1168.5" cy="665" r="8" fill="none" stroke="#555" stroke-width="1.6"/>
<g>
<radialGradient id="ncg" cx="0.5" cy="0.5" r="0.5"><stop offset="0.6" stop-color="#000" stop-opacity="0.08"/><stop offset="1" stop-color="#000" stop-opacity="0"/></radialGradient>
<circle cx="1785" cy="255" r="75" fill="url(#ncg)"/>
<path d="M1709,211 Q1722,186 1741,178 M1829,178 Q1850,188 1862,211" fill="none" stroke="#7a7a7a" stroke-width="2"/>
<path d="M1785,160 L1792,170 L1778,170Z M1785,349 L1792,339 L1778,339Z M1690,254 L1701,247 L1701,261Z M1880,254 L1869,247 L1869,261Z" fill="#777"/>
<polygon points="1783.5,191.1 1838.9,217.7 1782.4,254.0 1727.0,224.1" fill="#f2f2f2" stroke="#d4d4d4" stroke-width="0.8"/><polygon points="1727.0,224.1 1782.4,254.0 1787.8,316.7 1735.6,282.7" fill="#f2f2f2" stroke="#d4d4d4" stroke-width="0.8"/><polygon points="1782.4,254.0 1838.9,217.7 1841.0,279.5 1787.8,316.7" fill="#f2f2f2" stroke="#d4d4d4" stroke-width="0.8"/><path d="M1775.6,195.7 L1831.0,222.8" stroke="#dadada" stroke-width="0.8"/><path d="M1831.1,214.0 L1774.6,249.8" stroke="#dadada" stroke-width="0.8"/><path d="M1790.3,248.9 L1734.9,219.5" stroke="#dadada" stroke-width="0.8"/><path d="M1734.8,228.3 L1791.3,194.8" stroke="#dadada" stroke-width="0.8"/><path d="M1728.2,232.3 L1783.2,262.8" stroke="#dadada" stroke-width="0.8"/><path d="M1774.6,249.8 L1780.5,311.9" stroke="#dadada" stroke-width="0.8"/><path d="M1787.0,307.9 L1734.4,274.5" stroke="#dadada" stroke-width="0.8"/><path d="M1742.9,287.5 L1734.8,228.3" stroke="#dadada" stroke-width="0.8"/><path d="M1783.2,262.8 L1839.2,226.4" stroke="#dadada" stroke-width="0.8"/><path d="M1831.0,222.8 L1833.6,284.7" stroke="#dadada" stroke-width="0.8"/><path d="M1840.7,270.8 L1787.0,307.9" stroke="#dadada" stroke-width="0.8"/><path d="M1795.2,311.5 L1790.3,248.9" stroke="#dadada" stroke-width="0.8"/>
<text x="0" y="0" font-family="Liberation Sans" font-size="11" fill="#808080" transform="translate(1771,218) rotate(27)">TOP</text>
<text x="0" y="0" font-family="Liberation Sans" font-size="11" fill="#808080" transform="translate(1741,263) rotate(28)">FRONT</text>
<text x="0" y="0" font-family="Liberation Sans" font-size="11" fill="#808080" transform="translate(1799,280) rotate(-28)">RIGHT</text>
</g>
<g>
<path d="M626.3,973 L622.8,936.3" stroke="#2a2a8f" stroke-width="2"/>
<path d="M626.3,973 L660,952.4" stroke="#4a7a34" stroke-width="2"/>
<path d="M626.3,973 L658.5,991.9" stroke="#8e3030" stroke-width="2"/>
<circle cx="622.8" cy="936.3" r="7.6" fill="#26268a"/><circle cx="660" cy="952.4" r="7.6" fill="#4b7a33"/><circle cx="658.5" cy="991.9" r="7.6" fill="#9a3434"/>
<text x="622.8" y="940.6" text-anchor="middle" font-family="Liberation Sans" font-weight="bold" font-size="11.5" fill="#c8d4f0">Z</text>
<text x="660" y="956.7" text-anchor="middle" font-family="Liberation Sans" font-weight="bold" font-size="11.5" fill="#e4f0d8">Y</text>
<text x="658.5" y="996.2" text-anchor="middle" font-family="Liberation Sans" font-weight="bold" font-size="11.5" fill="#f4dcdc">X</text>
</g>
</g>
<linearGradient id="rulsh" x1="0" y1="0" x2="0" y2="1"><stop offset="0" stop-color="#000" stop-opacity="0"/><stop offset="1" stop-color="#000" stop-opacity="0.04"/></linearGradient>
<rect x="558" y="1033" width="1362" height="11" fill="url(#rulsh)"/>
<rect x="558" y="1044" width="1362" height="22" fill="#f8f8f8"/>
<rect x="558" y="1065" width="1362" height="1.5" fill="#9a9a9a" opacity="0.6"/>
<rect x="558" y="1066" width="1362" height="14" fill="#000"/>
<rect x="557.5" y="1044" width="1.3" height="18" fill="#b0b0b0"/><rect x="562.7" y="1044" width="1.1" height="12" fill="#cdcdcd"/><rect x="567.8" y="1044" width="1.1" height="12" fill="#cdcdcd"/><rect x="572.9" y="1044" width="1.1" height="12" fill="#cdcdcd"/><rect x="578.1" y="1044" width="1.1" height="12" fill="#cdcdcd"/><rect x="583.1" y="1044" width="1.3" height="18" fill="#b0b0b0"/><rect x="588.3" y="1044" width="1.1" height="12" fill="#cdcdcd"/><rect x="593.4" y="1044" width="1.1" height="12" fill="#cdcdcd"/><rect x="598.5" y="1044" width="1.1" height="12" fill="#cdcdcd"/><rect x="603.6" y="1044" width="1.1" height="12" fill="#cdcdcd"/><rect x="608.7" y="1044" width="1.3" height="18" fill="#b0b0b0"/><rect x="613.9" y="1044" width="1.1" height="12" fill="#cdcdcd"/><rect x="619.0" y="1044" width="1.1" height="12" fill="#cdcdcd"/><rect x="624.1" y="1044" width="1.1" height="12" fill="#cdcdcd"/><rect x="629.2" y="1044" width="1.1" height="12" fill="#cdcdcd"/><rect x="634.2" y="1044" width="1.3" height="18" fill="#b0b0b0"/><rect x="639.4" y="1044" width="1.1" height="12" fill="#cdcdcd"/><rect x="644.6" y="1044" width="1.1" height="12" fill="#cdcdcd"/><rect x="649.7" y="1044" width="1.1" height="12" fill="#cdcdcd"/><rect x="654.8" y="1044" width="1.1" height="12" fill="#cdcdcd"/><rect x="659.8" y="1044" width="1.3" height="18" fill="#b0b0b0"/><rect x="665.0" y="1044" width="1.1" height="12" fill="#cdcdcd"/><rect x="670.1" y="1044" width="1.1" height="12" fill="#cdcdcd"/><rect x="675.2" y="1044" width="1.1" height="12" fill="#cdcdcd"/><rect x="680.4" y="1044" width="1.1" height="12" fill="#cdcdcd"/><rect x="685.4" y="1044" width="1.3" height="18" fill="#b0b0b0"/><rect x="690.6" y="1044" width="1.1" height="12" fill="#cdcdcd"/><rect x="695.7" y="1044" width="1.1" height="12" fill="#cdcdcd"/><rect x="700.8" y="1044" width="1.1" height="12" fill="#cdcdcd"/><rect x="705.9" y="1044" width="1.1" height="12" fill="#cdcdcd"/><rect x="711.0" y="1044" width="1.3" height="18" fill="#b0b0b0"/><rect x="716.2" y="1044" width="1.1" height="12" fill="#cdcdcd"/><rect x="721.3" y="1044" width="1.1" height="12" fill="#cdcdcd"/><rect x="726.4" y="1044" width="1.1" height="12" fill="#cdcdcd"/><rect x="731.5" y="1044" width="1.1" height="12" fill="#cdcdcd"/><rect x="736.5" y="1044" width="1.3" height="18" fill="#b0b0b0"/><rect x="741.7" y="1044" width="1.1" height="12" fill="#cdcdcd"/><rect x="746.9" y="1044" width="1.1" height="12" fill="#cdcdcd"/><rect x="752.0" y="1044" width="1.1" height="12" fill="#cdcdcd"/><rect x="757.1" y="1044" width="1.1" height="12" fill="#cdcdcd"/><rect x="762.1" y="1044" width="1.3" height="18" fill="#b0b0b0"/><rect x="767.3" y="1044" width="1.1" height="12" fill="#cdcdcd"/><rect x="772.4" y="1044" width="1.1" height="12" fill="#cdcdcd"/><rect x="777.6" y="1044" width="1.1" height="12" fill="#cdcdcd"/><rect x="782.7" y="1044" width="1.1" height="12" fill="#cdcdcd"/><rect x="787.7" y="1044" width="1.3" height="18" fill="#b0b0b0"/><rect x="792.9" y="1044" width="1.1" height="12" fill="#cdcdcd"/><rect x="798.0" y="1044" width="1.1" height="12" fill="#cdcdcd"/><rect x="803.1" y="1044" width="1.1" height="12" fill="#cdcdcd"/><rect x="808.2" y="1044" width="1.1" height="12" fill="#cdcdcd"/><rect x="813.3" y="1044" width="1.3" height="18" fill="#b0b0b0"/><rect x="818.5" y="1044" width="1.1" height="12" fill="#cdcdcd"/><rect x="823.6" y="1044" width="1.1" height="12" fill="#cdcdcd"/><rect x="828.7" y="1044" width="1.1" height="12" fill="#cdcdcd"/><rect x="833.8" y="1044" width="1.1" height="12" fill="#cdcdcd"/><rect x="838.8" y="1044" width="1.3" height="18" fill="#b0b0b0"/><rect x="844.1" y="1044" width="1.1" height="12" fill="#cdcdcd"/><rect x="849.2" y="1044" width="1.1" height="12" fill="#cdcdcd"/><rect x="854.3" y="1044" width="1.1" height="12" fill="#cdcdcd"/><rect x="859.4" y="1044" width="1.1" height="12" fill="#cdcdcd"/><rect x="864.4" y="1044" width="1.3" height="18" fill="#b0b0b0"/><rect x="869.6" y="1044" width="1.1" height="12" fill="#cdcdcd"/><rect x="874.7" y="1044" width="1.1" height="12" fill="#cdcdcd"/><rect x="879.9" y="1044" width="1.1" height="12" fill="#cdcdcd"/><rect x="885.0" y="1044" width="1.1" height="12" fill="#cdcdcd"/><rect x="890.0" y="1044" width="1.3" height="18" fill="#b0b0b0"/><rect x="895.2" y="1044" width="1.1" height="12" fill="#cdcdcd"/><rect x="900.3" y="1044" width="1.1" height="12" fill="#cdcdcd"/><rect x="905.4" y="1044" width="1.1" height="12" fill="#cdcdcd"/><rect x="910.5" y="1044" width="1.1" height="12" fill="#cdcdcd"/><rect x="915.6" y="1044" width="1.3" height="18" fill="#b0b0b0"/><rect x="920.8" y="1044" width="1.1" height="12" fill="#cdcdcd"/><rect x="925.9" y="1044" width="1.1" height="12" fill="#cdcdcd"/><rect x="931.0" y="1044" width="1.1" height="12" fill="#cdcdcd"/><rect x="936.1" y="1044" width="1.1" height="12" fill="#cdcdcd"/><rect x="941.1" y="1044" width="1.3" height="18" fill="#b0b0b0"/><rect x="946.4" y="1044" width="1.1" height="12" fill="#cdcdcd"/><rect x="951.5" y="1044" width="1.1" height="12" fill="#cdcdcd"/><rect x="956.6" y="1044" width="1.1" height="12" fill="#cdcdcd"/><rect x="961.7" y="1044" width="1.1" height="12" fill="#cdcdcd"/><rect x="966.7" y="1044" width="1.3" height="18" fill="#b0b0b0"/><rect x="971.9" y="1044" width="1.1" height="12" fill="#cdcdcd"/><rect x="977.0" y="1044" width="1.1" height="12" fill="#cdcdcd"/><rect x="982.2" y="1044" width="1.1" height="12" fill="#cdcdcd"/><rect x="987.3" y="1044" width="1.1" height="12" fill="#cdcdcd"/><rect x="992.3" y="1044" width="1.3" height="18" fill="#b0b0b0"/><rect x="997.5" y="1044" width="1.1" height="12" fill="#cdcdcd"/><rect x="1002.6" y="1044" width="1.1" height="12" fill="#cdcdcd"/><rect x="1007.7" y="1044" width="1.1" height="12" fill="#cdcdcd"/><rect x="1012.9" y="1044" width="1.1" height="12" fill="#cdcdcd"/><rect x="1017.9" y="1044" width="1.3" height="18" fill="#b0b0b0"/><rect x="1023.1" y="1044" width="1.1" height="12" fill="#cdcdcd"/><rect x="1028.2" y="1044" width="1.1" height="12" fill="#cdcdcd"/><rect x="1033.3" y="1044" width="1.1" height="12" fill="#cdcdcd"/><rect x="1038.4" y="1044" width="1.1" height="12" fill="#cdcdcd"/><rect x="1043.4" y="1044" width="1.3" height="18" fill="#b0b0b0"/><rect x="1048.7" y="1044" width="1.1" height="12" fill="#cdcdcd"/><rect x="1053.8" y="1044" width="1.1" height="12" fill="#cdcdcd"/><rect x="1058.9" y="1044" width="1.1" height="12" fill="#cdcdcd"/><rect x="1064.0" y="1044" width="1.1" height="12" fill="#cdcdcd"/><rect x="1069.0" y="1044" width="1.3" height="18" fill="#b0b0b0"/><rect x="1074.2" y="1044" width="1.1" height="12" fill="#cdcdcd"/><rect x="1079.4" y="1044" width="1.1" height="12" fill="#cdcdcd"/><rect x="1084.5" y="1044" width="1.1" height="12" fill="#cdcdcd"/><rect x="1089.6" y="1044" width="1.1" height="12" fill="#cdcdcd"/><rect x="1094.6" y="1044" width="1.3" height="18" fill="#b0b0b0"/><rect x="1099.8" y="1044" width="1.1" height="12" fill="#cdcdcd"/><rect x="1104.9" y="1044" width="1.1" height="12" fill="#cdcdcd"/><rect x="1110.0" y="1044" width="1.1" height="12" fill="#cdcdcd"/><rect x="1115.2" y="1044" width="1.1" height="12" fill="#cdcdcd"/><rect x="1120.2" y="1044" width="1.3" height="18" fill="#b0b0b0"/><rect x="1125.4" y="1044" width="1.1" height="12" fill="#cdcdcd"/><rect x="1130.5" y="1044" width="1.1" height="12" fill="#cdcdcd"/><rect x="1135.6" y="1044" width="1.1" height="12" fill="#cdcdcd"/><rect x="1140.7" y="1044" width="1.1" height="12" fill="#cdcdcd"/><rect x="1145.7" y="1044" width="1.3" height="18" fill="#b0b0b0"/><rect x="1151.0" y="1044" width="1.1" height="12" fill="#cdcdcd"/><rect x="1156.1" y="1044" width="1.1" height="12" fill="#cdcdcd"/><rect x="1161.2" y="1044" width="1.1" height="12" fill="#cdcdcd"/><rect x="1166.3" y="1044" width="1.1" height="12" fill="#cdcdcd"/><rect x="1171.3" y="1044" width="1.3" height="18" fill="#b0b0b0"/><rect x="1176.5" y="1044" width="1.1" height="12" fill="#cdcdcd"/><rect x="1181.7" y="1044" width="1.1" height="12" fill="#cdcdcd"/><rect x="1186.8" y="1044" width="1.1" height="12" fill="#cdcdcd"/><rect x="1191.9" y="1044" width="1.1" height="12" fill="#cdcdcd"/><rect x="1196.9" y="1044" width="1.3" height="18" fill="#b0b0b0"/><rect x="1202.1" y="1044" width="1.1" height="12" fill="#cdcdcd"/><rect x="1207.2" y="1044" width="1.1" height="12" fill="#cdcdcd"/><rect x="1212.3" y="1044" width="1.1" height="12" fill="#cdcdcd"/><rect x="1217.5" y="1044" width="1.1" height="12" fill="#cdcdcd"/><rect x="1222.5" y="1044" width="1.3" height="18" fill="#b0b0b0"/><rect x="1227.7" y="1044" width="1.1" height="12" fill="#cdcdcd"/><rect x="1232.8" y="1044" width="1.1" height="12" fill="#cdcdcd"/><rect x="1237.9" y="1044" width="1.1" height="12" fill="#cdcdcd"/><rect x="1243.0" y="1044" width="1.1" height="12" fill="#cdcdcd"/><rect x="1248.1" y="1044" width="1.3" height="18" fill="#b0b0b0"/><rect x="1253.3" y="1044" width="1.1" height="12" fill="#cdcdcd"/><rect x="1258.4" y="1044" width="1.1" height="12" fill="#cdcdcd"/><rect x="1263.5" y="1044" width="1.1" height="12" fill="#cdcdcd"/><rect x="1268.6" y="1044" width="1.1" height="12" fill="#cdcdcd"/><rect x="1273.6" y="1044" width="1.3" height="18" fill="#b0b0b0"/><rect x="1278.8" y="1044" width="1.1" height="12" fill="#cdcdcd"/><rect x="1284.0" y="1044" width="1.1" height="12" fill="#cdcdcd"/><rect x="1289.1" y="1044" width="1.1" height="12" fill="#cdcdcd"/><rect x="1294.2" y="1044" width="1.1" height="12" fill="#cdcdcd"/><rect x="1299.2" y="1044" width="1.3" height="18" fill="#b0b0b0"/><rect x="1304.4" y="1044" width="1.1" height="12" fill="#cdcdcd"/><rect x="1309.5" y="1044" width="1.1" height="12" fill="#cdcdcd"/><rect x="1314.6" y="1044" width="1.1" height="12" fill="#cdcdcd"/><rect x="1319.8" y="1044" width="1.1" height="12" fill="#cdcdcd"/><rect x="1324.8" y="1044" width="1.3" height="18" fill="#b0b0b0"/><rect x="1330.0" y="1044" width="1.1" height="12" fill="#cdcdcd"/><rect x="1335.1" y="1044" width="1.1" height="12" fill="#cdcdcd"/><rect x="1340.2" y="1044" width="1.1" height="12" fill="#cdcdcd"/><rect x="1345.3" y="1044" width="1.1" height="12" fill="#cdcdcd"/><rect x="1350.4" y="1044" width="1.3" height="18" fill="#b0b0b0"/><rect x="1355.6" y="1044" width="1.1" height="12" fill="#cdcdcd"/><rect x="1360.7" y="1044" width="1.1" height="12" fill="#cdcdcd"/><rect x="1365.8" y="1044" width="1.1" height="12" fill="#cdcdcd"/><rect x="1370.9" y="1044" width="1.1" height="12" fill="#cdcdcd"/><rect x="1375.9" y="1044" width="1.3" height="18" fill="#b0b0b0"/><rect x="1381.1" y="1044" width="1.1" height="12" fill="#cdcdcd"/><rect x="1386.3" y="1044" width="1.1" height="12" fill="#cdcdcd"/><rect x="1391.4" y="1044" width="1.1" height="12" fill="#cdcdcd"/><rect x="1396.5" y="1044" width="1.1" height="12" fill="#cdcdcd"/><rect x="1401.5" y="1044" width="1.3" height="18" fill="#b0b0b0"/><rect x="1406.7" y="1044" width="1.1" height="12" fill="#cdcdcd"/><rect x="1411.8" y="1044" width="1.1" height="12" fill="#cdcdcd"/><rect x="1417.0" y="1044" width="1.1" height="12" fill="#cdcdcd"/><rect x="1422.1" y="1044" width="1.1" height="12" fill="#cdcdcd"/><rect x="1427.1" y="1044" width="1.3" height="18" fill="#b0b0b0"/><rect x="1432.3" y="1044" width="1.1" height="12" fill="#cdcdcd"/><rect x="1437.4" y="1044" width="1.1" height="12" fill="#cdcdcd"/><rect x="1442.5" y="1044" width="1.1" height="12" fill="#cdcdcd"/><rect x="1447.6" y="1044" width="1.1" height="12" fill="#cdcdcd"/><rect x="1452.7" y="1044" width="1.3" height="18" fill="#b0b0b0"/><rect x="1457.9" y="1044" width="1.1" height="12" fill="#cdcdcd"/><rect x="1463.0" y="1044" width="1.1" height="12" fill="#cdcdcd"/><rect x="1468.1" y="1044" width="1.1" height="12" fill="#cdcdcd"/><rect x="1473.2" y="1044" width="1.1" height="12" fill="#cdcdcd"/><rect x="1478.2" y="1044" width="1.3" height="18" fill="#b0b0b0"/><rect x="1483.5" y="1044" width="1.1" height="12" fill="#cdcdcd"/><rect x="1488.6" y="1044" width="1.1" height="12" fill="#cdcdcd"/><rect x="1493.7" y="1044" width="1.1" height="12" fill="#cdcdcd"/><rect x="1498.8" y="1044" width="1.1" height="12" fill="#cdcdcd"/><rect x="1503.8" y="1044" width="1.3" height="18" fill="#b0b0b0"/><rect x="1509.0" y="1044" width="1.1" height="12" fill="#cdcdcd"/><rect x="1514.1" y="1044" width="1.1" height="12" fill="#cdcdcd"/><rect x="1519.3" y="1044" width="1.1" height="12" fill="#cdcdcd"/><rect x="1524.4" y="1044" width="1.1" height="12" fill="#cdcdcd"/><rect x="1529.4" y="1044" width="1.3" height="18" fill="#b0b0b0"/><rect x="1534.6" y="1044" width="1.1" height="12" fill="#cdcdcd"/><rect x="1539.7" y="1044" width="1.1" height="12" fill="#cdcdcd"/><rect x="1544.8" y="1044" width="1.1" height="12" fill="#cdcdcd"/><rect x="1549.9" y="1044" width="1.1" height="12" fill="#cdcdcd"/><rect x="1555.0" y="1044" width="1.3" height="18" fill="#b0b0b0"/><rect x="1560.2" y="1044" width="1.1" height="12" fill="#cdcdcd"/><rect x="1565.3" y="1044" width="1.1" height="12" fill="#cdcdcd"/><rect x="1570.4" y="1044" width="1.1" height="12" fill="#cdcdcd"/><rect x="1575.5" y="1044" width="1.1" height="12" fill="#cdcdcd"/><rect x="1580.5" y="1044" width="1.3" height="18" fill="#b0b0b0"/><rect x="1585.8" y="1044" width="1.1" height="12" fill="#cdcdcd"/><rect x="1590.9" y="1044" width="1.1" height="12" fill="#cdcdcd"/><rect x="1596.0" y="1044" width="1.1" height="12" fill="#cdcdcd"/><rect x="1601.1" y="1044" width="1.1" height="12" fill="#cdcdcd"/><rect x="1606.1" y="1044" width="1.3" height="18" fill="#b0b0b0"/><rect x="1611.3" y="1044" width="1.1" height="12" fill="#cdcdcd"/><rect x="1616.4" y="1044" width="1.1" height="12" fill="#cdcdcd"/><rect x="1621.6" y="1044" width="1.1" height="12" fill="#cdcdcd"/><rect x="1626.7" y="1044" width="1.1" height="12" fill="#cdcdcd"/><rect x="1631.7" y="1044" width="1.3" height="18" fill="#b0b0b0"/><rect x="1636.9" y="1044" width="1.1" height="12" fill="#cdcdcd"/><rect x="1642.0" y="1044" width="1.1" height="12" fill="#cdcdcd"/><rect x="1647.1" y="1044" width="1.1" height="12" fill="#cdcdcd"/><rect x="1652.3" y="1044" width="1.1" height="12" fill="#cdcdcd"/><rect x="1657.3" y="1044" width="1.3" height="18" fill="#b0b0b0"/><rect x="1662.5" y="1044" width="1.1" height="12" fill="#cdcdcd"/><rect x="1667.6" y="1044" width="1.1" height="12" fill="#cdcdcd"/><rect x="1672.7" y="1044" width="1.1" height="12" fill="#cdcdcd"/><rect x="1677.8" y="1044" width="1.1" height="12" fill="#cdcdcd"/><rect x="1682.8" y="1044" width="1.3" height="18" fill="#b0b0b0"/><rect x="1688.1" y="1044" width="1.1" height="12" fill="#cdcdcd"/><rect x="1693.2" y="1044" width="1.1" height="12" fill="#cdcdcd"/><rect x="1698.3" y="1044" width="1.1" height="12" fill="#cdcdcd"/><rect x="1703.4" y="1044" width="1.1" height="12" fill="#cdcdcd"/><rect x="1708.4" y="1044" width="1.3" height="18" fill="#b0b0b0"/><rect x="1713.6" y="1044" width="1.1" height="12" fill="#cdcdcd"/><rect x="1718.8" y="1044" width="1.1" height="12" fill="#cdcdcd"/><rect x="1723.9" y="1044" width="1.1" height="12" fill="#cdcdcd"/><rect x="1729.0" y="1044" width="1.1" height="12" fill="#cdcdcd"/><rect x="1734.0" y="1044" width="1.3" height="18" fill="#b0b0b0"/><rect x="1739.2" y="1044" width="1.1" height="12" fill="#cdcdcd"/><rect x="1744.3" y="1044" width="1.1" height="12" fill="#cdcdcd"/><rect x="1749.4" y="1044" width="1.1" height="12" fill="#cdcdcd"/><rect x="1754.6" y="1044" width="1.1" height="12" fill="#cdcdcd"/><rect x="1759.6" y="1044" width="1.3" height="18" fill="#b0b0b0"/><rect x="1764.8" y="1044" width="1.1" height="12" fill="#cdcdcd"/><rect x="1769.9" y="1044" width="1.1" height="12" fill="#cdcdcd"/><rect x="1775.0" y="1044" width="1.1" height="12" fill="#cdcdcd"/><rect x="1780.1" y="1044" width="1.1" height="12" fill="#cdcdcd"/><rect x="1785.1" y="1044" width="1.3" height="18" fill="#b0b0b0"/><rect x="1790.4" y="1044" width="1.1" height="12" fill="#cdcdcd"/><rect x="1795.5" y="1044" width="1.1" height="12" fill="#cdcdcd"/><rect x="1800.6" y="1044" width="1.1" height="12" fill="#cdcdcd"/><rect x="1805.7" y="1044" width="1.1" height="12" fill="#cdcdcd"/><rect x="1810.7" y="1044" width="1.3" height="18" fill="#b0b0b0"/><rect x="1815.9" y="1044" width="1.1" height="12" fill="#cdcdcd"/><rect x="1821.1" y="1044" width="1.1" height="12" fill="#cdcdcd"/><rect x="1826.2" y="1044" width="1.1" height="12" fill="#cdcdcd"/><rect x="1831.3" y="1044" width="1.1" height="12" fill="#cdcdcd"/><rect x="1836.3" y="1044" width="1.3" height="18" fill="#b0b0b0"/><rect x="1841.5" y="1044" width="1.1" height="12" fill="#cdcdcd"/><rect x="1846.6" y="1044" width="1.1" height="12" fill="#cdcdcd"/><rect x="1851.7" y="1044" width="1.1" height="12" fill="#cdcdcd"/><rect x="1856.9" y="1044" width="1.1" height="12" fill="#cdcdcd"/><rect x="1861.9" y="1044" width="1.3" height="18" fill="#b0b0b0"/><rect x="1867.1" y="1044" width="1.1" height="12" fill="#cdcdcd"/><rect x="1872.2" y="1044" width="1.1" height="12" fill="#cdcdcd"/><rect x="1877.3" y="1044" width="1.1" height="12" fill="#cdcdcd"/><rect x="1882.4" y="1044" width="1.1" height="12" fill="#cdcdcd"/><rect x="1887.5" y="1044" width="1.3" height="18" fill="#b0b0b0"/><rect x="1892.7" y="1044" width="1.1" height="12" fill="#cdcdcd"/><rect x="1897.8" y="1044" width="1.1" height="12" fill="#cdcdcd"/><rect x="1902.9" y="1044" width="1.1" height="12" fill="#cdcdcd"/><rect x="1908.0" y="1044" width="1.1" height="12" fill="#cdcdcd"/><rect x="1913.0" y="1044" width="1.3" height="18" fill="#b0b0b0"/><rect x="1918.2" y="1044" width="1.1" height="12" fill="#cdcdcd"/>
<g font-family="Liberation Sans" font-weight="bold" font-size="12" fill="#e8e8e8"><text x="686.0" y="1077" text-anchor="middle">50</text><text x="813.9" y="1077" text-anchor="middle">100</text><text x="941.7" y="1077" text-anchor="middle">150</text><text x="1069.6" y="1077" text-anchor="middle">200</text><text x="1197.5" y="1077" text-anchor="middle">250</text><text x="1325.4" y="1077" text-anchor="middle">300</text><text x="1453.3" y="1077" text-anchor="middle">350</text><text x="1581.1" y="1077" text-anchor="middle">400</text><text x="1709.0" y="1077" text-anchor="middle">450</text><text x="1836.9" y="1077" text-anchor="middle">500</text></g>
<rect x="1871" y="1066" width="49" height="14" fill="#0e2438"/>
<text x="1897" y="1078" text-anchor="middle" font-family="Liberation Sans" font-size="12.5" fill="#3c8cc4">mm</text>
</svg>

<div id="header">
  <div style="position:absolute;left:860px;top:-12px;width:200px;height:12px;box-shadow:0 2px 8px rgba(0,0,0,0.07)"></div>
  <div class="t" style="left:35px;top:44.5px;font-size:33px;line-height:40px;letter-spacing:0.8px;color:#333">fixture<span style="color:#2f80a5">mate</span></div>
  <svg class="abs" style="left:205px;top:38px" width="26" height="26" viewBox="0 0 26 26"><path d="M13,2.2 L22.5,7.6 V18.4 L14.5,23 M11.5,23 L3.5,18.4 V7.6 L13,2.2" fill="none" stroke="#2f80a5" stroke-width="1.9"/></svg>
  <div class="hl" style="left:370px">Session</div>
  <div class="hl" style="left:728px">View</div>
  <div class="hl" style="left:1226px">State</div>
  <div class="hl" style="left:1513px;letter-spacing:0.3px">Support</div>
  <div class="hl" style="left:1770px">Settings</div>
  
<svg class="abs" style="left:450px;top:44px" width="26" height="30" viewBox="0 0 26 30">
 <path d="M5,4.5 H15.5 L21,10 V25 H5 Z M15.5,4.5 V10 H21" fill="none" stroke="#1a1a1a" stroke-width="1.7" stroke-linejoin="round" stroke-linecap="round" stroke-width="1.7"/></svg>
<svg class="abs" style="left:500px;top:45px" width="30" height="28" viewBox="0 0 30 28">
 <path d="M6.5,14 A10.5,10.5 0 1 1 10,22" fill="none" stroke="#1a1a1a" stroke-width="1.7" stroke-linejoin="round" stroke-linecap="round" stroke-width="1.9"/>
 <path d="M2.5,12.5 L6.5,17 L10.5,12.5 Z" fill="#1a1a1a"/>
 <path d="M17,7 V14 L21.5,17" fill="none" stroke="#1a1a1a" stroke-width="1.7" stroke-linejoin="round" stroke-linecap="round" stroke-width="1.9"/></svg>
<svg class="abs" style="left:553px;top:45px" width="28" height="28" viewBox="0 0 28 28">
 <path d="M4,6 Q4,3.5 6.5,3.5 H20 L24.5,8 V22 Q24.5,24.5 22,24.5 H6.5 Q4,24.5 4,22 Z" fill="none" stroke="#1a1a1a" stroke-width="1.7" stroke-linejoin="round" stroke-linecap="round" stroke-width="1.7"/>
 <path d="M9,3.5 V9.5 H19.5 V3.5 M8.5,24.5 V15.5 H20 V24.5" fill="none" stroke="#1a1a1a" stroke-width="1.7" stroke-linejoin="round" stroke-linecap="round" stroke-width="1.7"/></svg>
<svg class="abs" style="left:786px;top:43px" width="34" height="34" viewBox="0 0 34 34">
 <defs><linearGradient id="cg1" x1="0" x2="1"><stop offset="0" stop-color="#d0d0d0"/><stop offset="1" stop-color="#a9a9a9"/></linearGradient>
 <linearGradient id="cg2" x1="0" x2="1"><stop offset="0" stop-color="#bdbdbd"/><stop offset="1" stop-color="#d9d9d9"/></linearGradient></defs>
 <path d="M2,4.5 L17,1 L32,4.5 L17,9 Z" fill="#d8d8d8"/>
 <path d="M2,4.5 L17,9 V33 L3,26 Z" fill="url(#cg1)"/>
 <path d="M17,9 L32,4.5 V26 L17,33 Z" fill="url(#cg2)"/></svg>
<svg class="abs" style="left:840px;top:43px" width="32" height="32" viewBox="0 0 32 32">
 <path d="M2,8 V2 H8 M24,2 H30 V8 M30,24 V30 H24 M8,30 H2 V24" fill="none" stroke="#1a1a1a" stroke-width="1.7"/>
 <circle cx="16" cy="16" r="2" fill="#1a1a1a"/></svg>
<svg class="abs" style="left:893px;top:42px" width="30" height="34" viewBox="0 0 30 34"><path d="M15,1.5 L28.5,9 V25 L15,32.5 L1.5,25 V9 Z M1.5,9 L15,16.5 L28.5,9 M15,16.5 V32.5" fill="none" stroke="#111" stroke-width="1.7" stroke-linejoin="round"/></svg><svg class="abs" style="left:946px;top:42px" width="30" height="34" viewBox="0 0 30 34"><path d="M1.5,9 L15,16.5 V32.5 L1.5,25 Z" fill="#111"/><path d="M15,1.5 L28.5,9 V25 L15,32.5 L1.5,25 V9 Z M1.5,9 L15,16.5 L28.5,9 M15,16.5 V32.5" fill="none" stroke="#111" stroke-width="1.7" stroke-linejoin="round"/></svg><svg class="abs" style="left:998px;top:42px" width="30" height="34" viewBox="0 0 30 34"><path d="M28.5,9 L15,16.5 V32.5 L28.5,25 Z" fill="#111"/><path d="M15,1.5 L28.5,9 V25 L15,32.5 L1.5,25 V9 Z M1.5,9 L15,16.5 L28.5,9 M15,16.5 V32.5" fill="none" stroke="#111" stroke-width="1.7" stroke-linejoin="round"/></svg><svg class="abs" style="left:1051px;top:42px" width="30" height="34" viewBox="0 0 30 34"><path d="M1.5,9 L15,1.5 L28.5,9 L15,16.5 Z" fill="#111"/><path d="M15,1.5 L28.5,9 V25 L15,32.5 L1.5,25 V9 Z M1.5,9 L15,16.5 L28.5,9 M15,16.5 V32.5" fill="none" stroke="#111" stroke-width="1.7" stroke-linejoin="round"/></svg>
<svg class="abs" style="left:1286px;top:42px" width="30" height="30" viewBox="0 0 30 30">
 <path d="M7.5,8.5 A10.5,10.5 0 1 1 5,17" fill="none" stroke="#1a1a1a" stroke-width="2"/>
 <path d="M3,5.5 L9.5,4.5 L8,11 Z" fill="#1a1a1a"/></svg>
<svg class="abs" style="left:1339px;top:42px" width="30" height="30" viewBox="0 0 30 30">
 <path d="M22.5,8.5 A10.5,10.5 0 1 0 25,17" fill="none" stroke="#1a1a1a" stroke-width="2"/>
 <path d="M27,5.5 L20.5,4.5 L22,11 Z" fill="#1a1a1a"/></svg>
<svg class="abs" style="left:1594px;top:43px" width="32" height="32" viewBox="0 0 32 32">
 <circle cx="16" cy="16" r="13.8" fill="none" stroke="#1a1a1a" stroke-width="1.6"/>
 <text x="16" y="22" text-anchor="middle" font-family="Liberation Sans" font-size="16.5" fill="#1a1a1a">?</text></svg>
<svg class="abs" style="left:1849px;top:42px" width="34" height="34" viewBox="0 0 34 34">
 <path d="M17.00,2.60 L17.25,2.60 L17.50,2.61 L17.75,2.62 L18.00,2.64 L18.26,2.65 L18.51,2.68 L18.75,2.71 L19.00,2.80 L19.17,3.28 L19.33,3.79 L19.47,4.31 L19.58,4.84 L19.69,5.36 L19.78,5.86 L19.90,6.18 L20.09,6.23 L20.27,6.29 L20.46,6.35 L20.65,6.41 L20.83,6.48 L21.01,6.54 L21.20,6.62 L21.38,6.69 L21.56,6.77 L21.73,6.85 L21.91,6.93 L22.08,7.02 L22.26,7.11 L22.43,7.20 L22.60,7.30 L22.91,7.16 L23.33,6.87 L23.77,6.57 L24.23,6.29 L24.69,6.01 L25.16,5.76 L25.63,5.55 L25.87,5.65 L26.06,5.81 L26.26,5.97 L26.45,6.13 L26.64,6.30 L26.82,6.47 L27.00,6.64 L27.18,6.82 L27.36,7.00 L27.53,7.18 L27.70,7.36 L27.87,7.55 L28.03,7.74 L28.19,7.94 L28.35,8.13 L28.45,8.37 L28.24,8.84 L27.99,9.31 L27.71,9.77 L27.43,10.23 L27.13,10.67 L26.84,11.09 L26.70,11.40 L26.80,11.57 L26.89,11.74 L26.98,11.92 L27.07,12.09 L27.15,12.27 L27.23,12.44 L27.31,12.62 L27.38,12.80 L27.46,12.99 L27.52,13.17 L27.59,13.35 L27.65,13.54 L27.71,13.73 L27.77,13.91 L27.82,14.10 L28.14,14.22 L28.64,14.31 L29.16,14.42 L29.69,14.53 L30.21,14.67 L30.72,14.83 L31.20,15.00 L31.29,15.25 L31.32,15.49 L31.35,15.74 L31.36,16.00 L31.38,16.25 L31.39,16.50 L31.40,16.75 L31.40,17.00 L31.40,17.25 L31.39,17.50 L31.38,17.75 L31.36,18.00 L31.35,18.26 L31.32,18.51 L31.29,18.75 L31.20,19.00 L30.72,19.17 L30.21,19.33 L29.69,19.47 L29.16,19.58 L28.64,19.69 L28.14,19.78 L27.82,19.90 L27.77,20.09 L27.71,20.27 L27.65,20.46 L27.59,20.65 L27.52,20.83 L27.46,21.01 L27.38,21.20 L27.31,21.38 L27.23,21.56 L27.15,21.73 L27.07,21.91 L26.98,22.08 L26.89,22.26 L26.80,22.43 L26.70,22.60 L26.84,22.91 L27.13,23.33 L27.43,23.77 L27.71,24.23 L27.99,24.69 L28.24,25.16 L28.45,25.63 L28.35,25.87 L28.19,26.06 L28.03,26.26 L27.87,26.45 L27.70,26.64 L27.53,26.82 L27.36,27.00 L27.18,27.18 L27.00,27.36 L26.82,27.53 L26.64,27.70 L26.45,27.87 L26.26,28.03 L26.06,28.19 L25.87,28.35 L25.63,28.45 L25.16,28.24 L24.69,27.99 L24.23,27.71 L23.77,27.43 L23.33,27.13 L22.91,26.84 L22.60,26.70 L22.43,26.80 L22.26,26.89 L22.08,26.98 L21.91,27.07 L21.73,27.15 L21.56,27.23 L21.38,27.31 L21.20,27.38 L21.01,27.46 L20.83,27.52 L20.65,27.59 L20.46,27.65 L20.27,27.71 L20.09,27.77 L19.90,27.82 L19.78,28.14 L19.69,28.64 L19.58,29.16 L19.47,29.69 L19.33,30.21 L19.17,30.72 L19.00,31.20 L18.75,31.29 L18.51,31.32 L18.26,31.35 L18.00,31.36 L17.75,31.38 L17.50,31.39 L17.25,31.40 L17.00,31.40 L16.75,31.40 L16.50,31.39 L16.25,31.38 L16.00,31.36 L15.74,31.35 L15.49,31.32 L15.25,31.29 L15.00,31.20 L14.83,30.72 L14.67,30.21 L14.53,29.69 L14.42,29.16 L14.31,28.64 L14.22,28.14 L14.10,27.82 L13.91,27.77 L13.73,27.71 L13.54,27.65 L13.35,27.59 L13.17,27.52 L12.99,27.46 L12.80,27.38 L12.62,27.31 L12.44,27.23 L12.27,27.15 L12.09,27.07 L11.92,26.98 L11.74,26.89 L11.57,26.80 L11.40,26.70 L11.09,26.84 L10.67,27.13 L10.23,27.43 L9.77,27.71 L9.31,27.99 L8.84,28.24 L8.37,28.45 L8.13,28.35 L7.94,28.19 L7.74,28.03 L7.55,27.87 L7.36,27.70 L7.18,27.53 L7.00,27.36 L6.82,27.18 L6.64,27.00 L6.47,26.82 L6.30,26.64 L6.13,26.45 L5.97,26.26 L5.81,26.06 L5.65,25.87 L5.55,25.63 L5.76,25.16 L6.01,24.69 L6.29,24.23 L6.57,23.77 L6.87,23.33 L7.16,22.91 L7.30,22.60 L7.20,22.43 L7.11,22.26 L7.02,22.08 L6.93,21.91 L6.85,21.73 L6.77,21.56 L6.69,21.38 L6.62,21.20 L6.54,21.01 L6.48,20.83 L6.41,20.65 L6.35,20.46 L6.29,20.27 L6.23,20.09 L6.18,19.90 L5.86,19.78 L5.36,19.69 L4.84,19.58 L4.31,19.47 L3.79,19.33 L3.28,19.17 L2.80,19.00 L2.71,18.75 L2.68,18.51 L2.65,18.26 L2.64,18.00 L2.62,17.75 L2.61,17.50 L2.60,17.25 L2.60,17.00 L2.60,16.75 L2.61,16.50 L2.62,16.25 L2.64,16.00 L2.65,15.74 L2.68,15.49 L2.71,15.25 L2.80,15.00 L3.28,14.83 L3.79,14.67 L4.31,14.53 L4.84,14.42 L5.36,14.31 L5.86,14.22 L6.18,14.10 L6.23,13.91 L6.29,13.73 L6.35,13.54 L6.41,13.35 L6.48,13.17 L6.54,12.99 L6.62,12.80 L6.69,12.62 L6.77,12.44 L6.85,12.27 L6.93,12.09 L7.02,11.92 L7.11,11.74 L7.20,11.57 L7.30,11.40 L7.16,11.09 L6.87,10.67 L6.57,10.23 L6.29,9.77 L6.01,9.31 L5.76,8.84 L5.55,8.37 L5.65,8.13 L5.81,7.94 L5.97,7.74 L6.13,7.55 L6.30,7.36 L6.47,7.18 L6.64,7.00 L6.82,6.82 L7.00,6.64 L7.18,6.47 L7.36,6.30 L7.55,6.13 L7.74,5.97 L7.94,5.81 L8.13,5.65 L8.37,5.55 L8.84,5.76 L9.31,6.01 L9.77,6.29 L10.23,6.57 L10.67,6.87 L11.09,7.16 L11.40,7.30 L11.57,7.20 L11.74,7.11 L11.92,7.02 L12.09,6.93 L12.27,6.85 L12.44,6.77 L12.62,6.69 L12.80,6.62 L12.99,6.54 L13.17,6.48 L13.35,6.41 L13.54,6.35 L13.73,6.29 L13.91,6.23 L14.10,6.18 L14.22,5.86 L14.31,5.36 L14.42,4.84 L14.53,4.31 L14.67,3.79 L14.83,3.28 L15.00,2.80 L15.25,2.71 L15.49,2.68 L15.74,2.65 L16.00,2.64 L16.25,2.62 L16.50,2.61 L16.75,2.60Z" fill="none" stroke="#1a1a1a" stroke-width="1.7" stroke-linejoin="round"/>
 <circle cx="17" cy="17" r="4.8" fill="none" stroke="#1a1a1a" stroke-width="1.7"/></svg>

</div>
<div id="sidebar"></div>

<svg class="abs" style="left:37px;top:157px" width="34" height="28" viewBox="0 0 34 28">
 <path d="M9,24.5 H25.5 A6.5,6.5 0 0 0 26.5,11.6 A9.5,9.5 0 0 0 8.5,9.8 A7.5,7.5 0 0 0 9,24.5 Z" fill="none" stroke="#111" stroke-width="2.3" stroke-linejoin="round"/>
 <path d="M17,21 V11 M13,15 L17,11 L21,15" fill="none" stroke="#111" stroke-width="2.3"/></svg>
<div class="sb" style="top:200px;background:#3a80a1;border-radius:7px"></div>
<svg class="abs" style="left:36px;top:213px" width="36" height="24" viewBox="0 0 36 24">
 <path d="M2,11 L18,3.5 L34,11 L18,18.5 Z" fill="#fff"/>
 <path d="M2,11 V13 L18,20.5 L34,13 V11 L18,18.5 Z" fill="#fff" opacity="0.85"/>
 <ellipse cx="18" cy="7" rx="3.6" ry="1.7" fill="#3a80a1"/><ellipse cx="11" cy="11" rx="3.6" ry="1.7" fill="#3a80a1"/>
 <ellipse cx="25" cy="11" rx="3.6" ry="1.7" fill="#3a80a1"/><ellipse cx="18" cy="15" rx="3.6" ry="1.7" fill="#3a80a1"/></svg>
<svg class="abs" style="left:37px;top:264px" width="34" height="27" viewBox="0 0 34 27">
 <path d="M1.5,18 L17,11 L32.5,18 L17,25.5 Z" fill="none" stroke="#111" stroke-width="1.5"/>
 <path d="M9,5 L17,1.5 L25,5 V17 L17,21 L9,17 Z" fill="#111"/>
 <path d="M9,5 L17,9 L25,5 M17,9 V21" stroke="#e1e1e1" stroke-width="1" fill="none"/></svg>
<svg class="abs" style="left:42px;top:317px" width="24" height="27" viewBox="0 0 24 27">
 <path d="M2.6,4.3 L6.7,2.9 L6.4,5.4 Z" fill="#111"/>
 <path d="M2,6.2 L5.1,7 Q6.5,8.5 7,9.8 Q8.5,12.5 10.8,14.8 V24.3 L2,21.1 Z" fill="#111"/>
 <path d="M11.1,1.6 L21.2,12.6 Q18.5,14.8 16.5,14.5 Q13,14.2 11.7,13.3 Q8.6,10.5 8.6,7 Q8.6,3.2 11.1,1.6 Z" fill="#111"/>
 <path d="M13,15.8 Q15,16.4 16.2,15.8 L21.8,13.9 V21.1 L13,24.6 Z" fill="#111"/></svg>
<svg class="abs" style="left:41px;top:367px" width="26" height="30" viewBox="0 0 26 30">
 <rect x="11.7" y="1.9" width="2.2" height="5.5" rx="1" fill="#111"/>
 <ellipse cx="12.8" cy="7.6" rx="5.9" ry="1.4" fill="#111"/>
 <path d="M7.2,10 Q12.8,11.6 18.7,10 L17.6,18.5 Q12.8,20.2 8.7,18.5 Z" fill="#111"/>
 <path d="M1.7,21.4 L12.8,17.4 Q8.5,18.8 9.5,19.8 Q12.8,21.2 16,19.8 Q17.5,18.8 12.8,17.4 L23.9,21.4 L12.8,25.6 Z" fill="#111"/>
 <path d="M1.7,22.6 V24 L11.8,27.6 V26.2 Z M23.9,22.6 V24 L13.8,27.6 V26.2 Z" fill="#111"/></svg>
<svg class="abs" style="left:41px;top:422px" width="24" height="26" viewBox="0 0 24 26">
 <path d="M1.5,4.5 L19,0.8 L22.5,3 V7 L14,9 V22 L10,24.5 L6.5,22 V10 L1.5,8.5 Z" fill="#111"/>
 <path d="M1.5,4.5 L6.5,7 L22.5,3 M6.5,7 V10 M10,10.5 V24.5" stroke="#e1e1e1" stroke-width="1" fill="none"/></svg>
<svg class="abs" style="left:42px;top:476px" width="24" height="26" viewBox="0 0 24 26">
 <rect x="11" y="1.5" width="2" height="3.5" fill="#111"/><rect x="11" y="21" width="2" height="3.5" fill="#111"/>
 <ellipse cx="12" cy="10.5" rx="11" ry="4" fill="#111"/>
 <path d="M1,10.5 V15.5 A11,4 0 0 0 23,15.5 V10.5 A11,4 0 0 1 1,10.5Z" fill="#111"/>
 <path d="M1.5,12 A11,4 0 0 0 22.5,12" stroke="#e1e1e1" stroke-width="1.2" fill="none"/></svg>
<svg class="abs" style="left:39px;top:529px" width="30" height="22" viewBox="0 0 30 22">
 <path d="M7.5,20.5 H23 A6,6 0 0 0 24,8.7 A8.7,8.7 0 0 0 7.5,7.2 A6.7,6.7 0 0 0 7.5,20.5 Z" fill="#111"/>
 <path d="M15,8.5 V17 M11.5,13.5 L15,17 L18.5,13.5" stroke="#fff" stroke-width="2" fill="none"/></svg>
<svg class="abs" style="left:35px;top:977px" width="38" height="42" viewBox="0 0 38 42">
 <path d="M5,11.2 L19.1,3.4 L33.2,11.2 M34.7,13.8 V29 L21.2,36.4 M17,36.4 L3.4,29 V13.8" fill="none" stroke="#3a8bb5" stroke-width="2.4" stroke-linecap="round" stroke-linejoin="round"/>
 <circle cx="19.1" cy="14.8" r="5" fill="#5b5b5b"/>
 <path d="M9.4,27.4 Q19.1,17.2 28.8,27.4 L19.1,33.6 Z" fill="#5b5b5b"/></svg>

<div style="position:absolute;left:0;top:1044px;width:108px;height:36px;background:#3d3d3c;box-shadow:0 -3px 6px rgba(0,0,0,0.16)"></div>
<div class="t" style="left:40px;top:1053px;font-size:15px;line-height:18px;color:#d0d0d0">v2.0</div>
<div id="panel">
  <div id="pcard">
    <div class="t" style="left:26px;top:44px;font-size:17.4px;line-height:20px;color:#222">Select Baseplate</div>
    <svg class="abs" style="left:369px;top:45px" width="20" height="16" viewBox="0 0 20 16"><path d="M3,8.4 H18.4 M6.6,5 L3,8.4 L6.6,11.8" fill="none" stroke="#111" stroke-width="1.6" stroke-linecap="round"/></svg>
  </div>
  <svg class="abs" style="left:29px;top:151px" width="18" height="18" viewBox="0 0 18 18"><circle cx="9" cy="9" r="8.5" fill="#2b2b2b"/><rect x="8" y="7.6" width="2" height="5.6" fill="#fff"/><circle cx="9" cy="5.6" r="1.1" fill="#fff"/></svg>
  <div class="t" style="left:27px;top:198px;font-size:15.3px;line-height:19.4px;color:#333;letter-spacing:0.14px">Choose between 3d-printed baseplates or select one<br>of the listed standard components.</div>
  <div style="position:absolute;left:27px;top:275px;width:188px;height:55px;background:#e2e2e2;border-radius:5px"></div>
  <div class="t" style="left:27px;top:294px;width:188px;text-align:center;font-size:15.5px;line-height:18px;color:#222">Select</div>
  <div class="t" style="left:27px;top:413px;font-size:17.9px;line-height:20px;color:#222">Perforated Panel</div>
  <div class="row" style="top:460.5px"><div class="l">Position X</div><div class="v">-25.0 mm</div></div><div class="row" style="top:507.0px"><div class="l">Position Y</div><div class="v">123.0 mm</div></div><div class="row" style="top:553.5px"><div class="l">Width</div><div class="v">175.0 mm</div></div><div class="row" style="top:600.0px"><div class="l">Depth</div><div class="v">400.0 mm</div></div><div class="row" style="top:646.5px"><div class="l">Height</div><div class="v">10.0 mm</div></div><div class="row" style="top:693.0px"><div class="l">Transparent</div><div style="position:absolute;right:14px;top:14px;width:17.5px;height:17.5px;border:1.3px solid #333;border-radius:2.5px;background:#fff"></div></div><div class="row" style="top:739.5px"><div class="l">Mounting Holes Diameter</div><div class="v">6.0 mm</div></div><div class="row" style="top:786.0px"><div class="l">Mounting Holes Distance</div><div class="v">20.0 mm</div></div>
  <div style="position:absolute;left:0;top:925px;width:448px;height:1px;background:#dedede"></div>
</div>
<div style="position:absolute;left:109px;top:1044px;width:448px;height:22px;background:#fafafa"></div>
<div style="position:absolute;left:109px;top:1066px;width:448px;height:14px;background:#0d2538"></div>
<div style="position:absolute;left:557px;top:119px;width:1px;height:961px;background:#e3e3e3"></div>

</body></html>
